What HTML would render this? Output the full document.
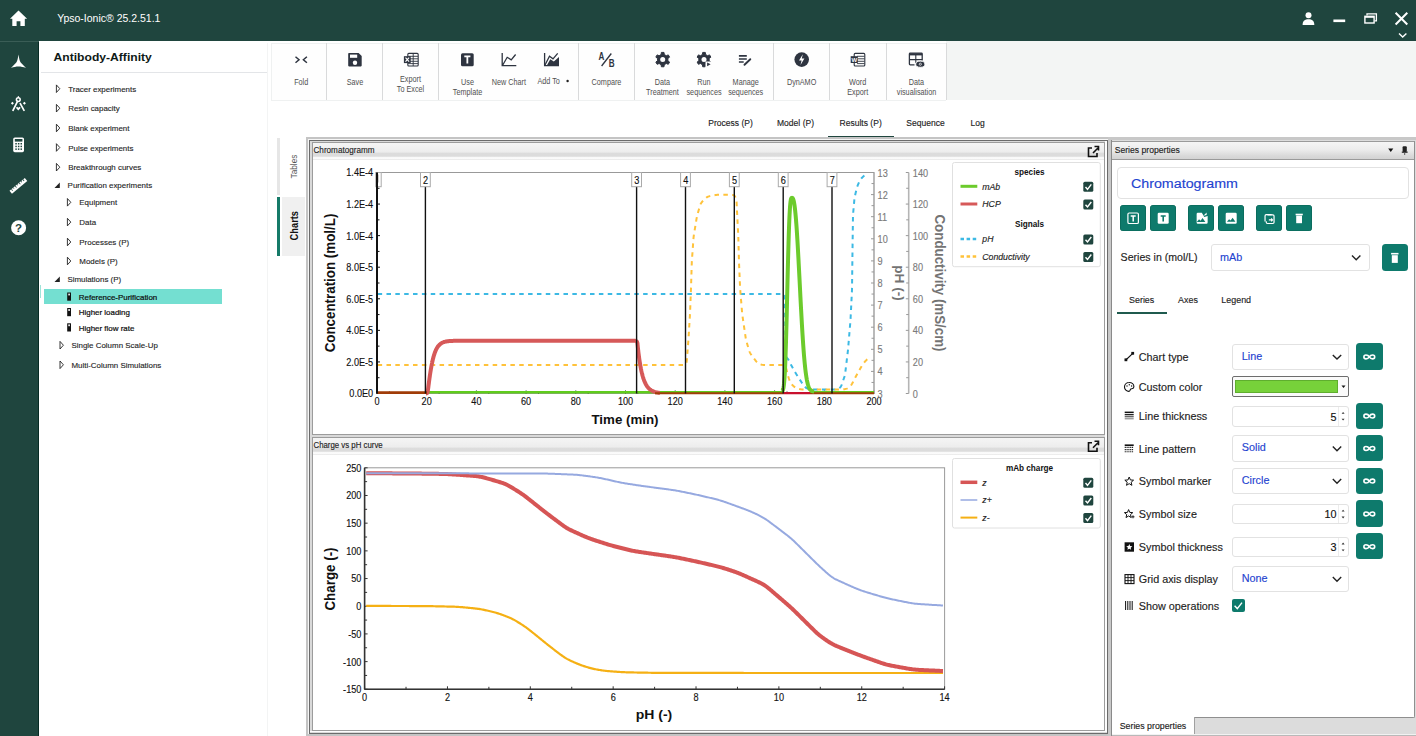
<!DOCTYPE html><html><head><meta charset="utf-8"><style>
*{box-sizing:border-box;margin:0;padding:0}
html,body{width:1416px;height:736px;overflow:hidden;background:#fff;font-family:"Liberation Sans",sans-serif;color:#222}
.a{position:absolute}
svg{position:absolute;left:0;top:0;font-family:"Liberation Sans",sans-serif}
</style></head><body>
<div class="a" style="left:0.00px;top:0.00px;width:1416.00px;height:41.00px;background:#1f453e"></div>
<div class="a" style="left:0.00px;top:41.00px;width:39.00px;height:695.00px;background:#1f453e"></div>
<div class="a" style="left:0.00px;top:41.00px;width:39.00px;height:1.00px;background:#3a5d56"></div>
<div class="a" style="left:38.00px;top:42.00px;width:1.00px;height:694.00px;background:#072b24"></div>
<div class="a" style="left:41.00px;top:72.00px;width:227.00px;height:1.20px;background:#e3e5e8"></div>
<div class="a" style="left:267.30px;top:42.50px;width:1.00px;height:693.50px;background:#f3f4f4"></div>
<div class="a" style="left:43.50px;top:289.20px;width:178.00px;height:14.70px;background:#74dfd1"></div>
<div class="a" style="left:39.60px;top:285.40px;width:1.40px;height:13.10px;background:#9fe3d8"></div>
<div class="a" style="left:271.30px;top:42.50px;width:675.00px;height:58.00px;background:#fefefe;border:1px solid #eff1f1;border-right:none"></div>
<div class="a" style="left:946.00px;top:41.00px;width:470.00px;height:59.00px;background:#f3f5f4"></div>
<div class="a" style="left:326.00px;top:43.00px;width:1.30px;height:57.00px;background:#d9dadb"></div>
<div class="a" style="left:382.00px;top:43.00px;width:1.30px;height:57.00px;background:#d9dadb"></div>
<div class="a" style="left:438.00px;top:43.00px;width:1.30px;height:57.00px;background:#d9dadb"></div>
<div class="a" style="left:578.00px;top:43.00px;width:1.30px;height:57.00px;background:#d9dadb"></div>
<div class="a" style="left:634.00px;top:43.00px;width:1.30px;height:57.00px;background:#d9dadb"></div>
<div class="a" style="left:773.00px;top:43.00px;width:1.30px;height:57.00px;background:#d9dadb"></div>
<div class="a" style="left:829.00px;top:43.00px;width:1.30px;height:57.00px;background:#d9dadb"></div>
<div class="a" style="left:886.00px;top:43.00px;width:1.30px;height:57.00px;background:#d9dadb"></div>
<div class="a" style="left:946.00px;top:43.00px;width:1.30px;height:57.00px;background:#d9dadb"></div>
<div class="a" style="left:828.00px;top:135.60px;width:66.00px;height:2.20px;background:#1f453e"></div>
<div class="a" style="left:277.00px;top:137.60px;width:3.00px;height:57.00px;background:#e6e6e6"></div>
<div class="a" style="left:277.00px;top:196.50px;width:3.00px;height:59.50px;background:#167a68"></div>
<div class="a" style="left:282.00px;top:196.50px;width:23.00px;height:59.50px;background:#f0f0f0"></div>
<div class="a" style="left:306.00px;top:137.00px;width:804.00px;height:599.00px;background:#c4c4c4"></div>
<div class="a" style="left:308.00px;top:139.00px;width:800.00px;height:594.70px;background:#f6f6f6"></div>
<div class="a" style="left:309.00px;top:140.00px;width:799.00px;height:593.70px;border:1px solid #6b6b6b;background:#d9d9d9"></div>
<div class="a" style="left:312.00px;top:142.30px;width:793.30px;height:292.70px;border:1px solid #9c9c9c;background:#fff"></div>
<div class="a" style="left:313.00px;top:143.30px;width:791.30px;height:16.50px;background:linear-gradient(#f5f5f5 0%,#ededed 52%,#dcdcdc 62%,#dcdcdc 78%,#f9f9f9 84%,#fbfbfb 94%,#dedede 100%)"></div>
<div class="a" style="left:312.00px;top:437.40px;width:793.30px;height:293.20px;border:1px solid #9c9c9c;background:#fff"></div>
<div class="a" style="left:313.00px;top:438.40px;width:791.30px;height:16.50px;background:linear-gradient(#f5f5f5 0%,#ededed 52%,#dcdcdc 62%,#dcdcdc 78%,#f9f9f9 84%,#fbfbfb 94%,#dedede 100%)"></div>
<div class="a" style="left:1105.30px;top:141.00px;width:1.80px;height:591.00px;background:#fdfdfd"></div>
<div class="a" style="left:310.00px;top:730.60px;width:797.00px;height:1.30px;background:#fdfdfd"></div>
<div class="a" style="left:1108.00px;top:137.00px;width:308.00px;height:599.00px;background:#c8c8c8"></div>
<div class="a" style="left:1111.00px;top:140.00px;width:305.00px;height:596.00px;background:#dcdcdc;border-left:1px solid #8a8a8a"></div>
<div class="a" style="left:1112.00px;top:140.50px;width:303.00px;height:577.50px;background:#fff;border-right:1.3px solid #8f8f8f;border-bottom:1.3px solid #8f8f8f;border-top:1px solid #9a9a9a;border-bottom-right-radius:2px"></div>
<div class="a" style="left:1112.00px;top:141.50px;width:301.70px;height:18.50px;background:linear-gradient(#f5f5f5,#ececec 45%,#dadada 80%,#d2d2d2);border-bottom:1.3px solid #9a9a9a"></div>
<div class="a" style="left:1112.00px;top:716.60px;width:83.00px;height:18.00px;background:#fff;border-right:1px solid #a0a0a0"></div>
<div class="a" style="left:1112.00px;top:734.30px;width:304.00px;height:1.00px;background:#f2f2f2"></div>
<div class="a" style="left:1112.00px;top:735.30px;width:304.00px;height:0.70px;background:#b9b9b9"></div>
<div class="a" style="left:1117.20px;top:166.80px;width:291.40px;height:31.80px;border:1px solid #e2e2e2;border-radius:4px;background:#fff"></div>
<div class="a" style="left:1120.00px;top:205.10px;width:26.20px;height:26.30px;background:#0e7a6c;border-radius:3.5px;box-shadow:inset 0 0 0 0.6px #096455"></div>
<div class="a" style="left:1149.70px;top:205.10px;width:26.20px;height:26.30px;background:#0e7a6c;border-radius:3.5px;box-shadow:inset 0 0 0 0.6px #096455"></div>
<div class="a" style="left:1188.10px;top:205.10px;width:26.20px;height:26.30px;background:#0e7a6c;border-radius:3.5px;box-shadow:inset 0 0 0 0.6px #096455"></div>
<div class="a" style="left:1217.90px;top:205.10px;width:26.20px;height:26.30px;background:#0e7a6c;border-radius:3.5px;box-shadow:inset 0 0 0 0.6px #096455"></div>
<div class="a" style="left:1256.30px;top:205.10px;width:26.20px;height:26.30px;background:#0e7a6c;border-radius:3.5px;box-shadow:inset 0 0 0 0.6px #096455"></div>
<div class="a" style="left:1286.00px;top:205.10px;width:26.20px;height:26.30px;background:#0e7a6c;border-radius:3.5px;box-shadow:inset 0 0 0 0.6px #096455"></div>
<div class="a" style="left:1210.50px;top:244.40px;width:159.20px;height:26.20px;border:1px solid #e2e2e2;border-radius:3px;background:#fff"></div>
<div class="a" style="left:1381.60px;top:244.10px;width:26.40px;height:26.50px;background:#0e7a6c;border-radius:3.5px"></div>
<div class="a" style="left:1117.20px;top:312.00px;width:49.60px;height:2.20px;background:#1f5a4e"></div>
<div class="a" style="left:1231.80px;top:343.60px;width:117.70px;height:26.40px;border:1px solid #e2e2e2;border-radius:3px;background:#fff"></div>
<div class="a" style="left:1356.00px;top:343.30px;width:26.60px;height:26.40px;background:#0e7a6c;border-radius:3.5px"></div>
<div class="a" style="left:1231.80px;top:376.20px;width:117.70px;height:20.40px;border:1px solid #6d6d6d;border-radius:2px;background:#fafafa"></div>
<div class="a" style="left:1235.30px;top:380.30px;width:102.70px;height:12.70px;background:#77d13a;border:1px solid #5fae2e"></div>
<div class="a" style="left:1231.80px;top:406.00px;width:117.70px;height:20.50px;border:1px solid #e2e2e2;border-radius:3px;background:#fff"></div>
<div class="a" style="left:1338.00px;top:407.00px;width:1.00px;height:18.50px;background:#ececec"></div>
<div class="a" style="left:1356.00px;top:402.50px;width:26.60px;height:26.40px;background:#0e7a6c;border-radius:3.5px"></div>
<div class="a" style="left:1231.80px;top:435.20px;width:117.70px;height:26.40px;border:1px solid #e2e2e2;border-radius:3px;background:#fff"></div>
<div class="a" style="left:1356.00px;top:434.90px;width:26.60px;height:26.40px;background:#0e7a6c;border-radius:3.5px"></div>
<div class="a" style="left:1231.80px;top:467.80px;width:117.70px;height:26.40px;border:1px solid #e2e2e2;border-radius:3px;background:#fff"></div>
<div class="a" style="left:1356.00px;top:467.50px;width:26.60px;height:26.40px;background:#0e7a6c;border-radius:3.5px"></div>
<div class="a" style="left:1231.80px;top:503.80px;width:117.70px;height:20.50px;border:1px solid #e2e2e2;border-radius:3px;background:#fff"></div>
<div class="a" style="left:1338.00px;top:504.80px;width:1.00px;height:18.50px;background:#ececec"></div>
<div class="a" style="left:1356.00px;top:500.30px;width:26.60px;height:26.40px;background:#0e7a6c;border-radius:3.5px"></div>
<div class="a" style="left:1231.80px;top:536.60px;width:117.70px;height:20.50px;border:1px solid #e2e2e2;border-radius:3px;background:#fff"></div>
<div class="a" style="left:1338.00px;top:537.60px;width:1.00px;height:18.50px;background:#ececec"></div>
<div class="a" style="left:1356.00px;top:533.10px;width:26.60px;height:26.40px;background:#0e7a6c;border-radius:3.5px"></div>
<div class="a" style="left:1231.80px;top:565.70px;width:117.70px;height:26.40px;border:1px solid #e2e2e2;border-radius:3px;background:#fff"></div>
<div class="a" style="left:1232.00px;top:599.20px;width:12.70px;height:13.20px;background:#0e7a6c;border-radius:2px"></div>
<svg width="1416" height="736"><text transform="translate(57.20,21.70) scale(1.040,1)" font-size="10.10" fill="#fff" font-weight="normal" font-style="normal" text-anchor="start">Ypso-Ionic® 25.2.51.1</text><text transform="translate(53.50,60.90) scale(1.064,1)" font-size="11.40" fill="#0f1a17" font-weight="bold" font-style="normal" text-anchor="start">Antibody-Affinity</text><text transform="translate(68.20,91.70) scale(1.025,1)" font-size="7.75" fill="#1e1e1e" font-weight="normal" font-style="normal" text-anchor="start" stroke="#1e1e1e" stroke-width="0.12">Tracer experiments</text><path d="M56.4,84.9 L59.8,88.7 L56.4,92.5 Z" fill="none" stroke="#222" stroke-width="0.9" stroke-linejoin="round"/><text transform="translate(68.20,111.20) scale(1.025,1)" font-size="7.75" fill="#1e1e1e" font-weight="normal" font-style="normal" text-anchor="start" stroke="#1e1e1e" stroke-width="0.12">Resin capacity</text><path d="M56.4,104.4 L59.8,108.2 L56.4,112.0 Z" fill="none" stroke="#222" stroke-width="0.9" stroke-linejoin="round"/><text transform="translate(68.20,131.00) scale(1.025,1)" font-size="7.75" fill="#1e1e1e" font-weight="normal" font-style="normal" text-anchor="start" stroke="#1e1e1e" stroke-width="0.12">Blank experiment</text><path d="M56.4,124.2 L59.8,128.0 L56.4,131.8 Z" fill="none" stroke="#222" stroke-width="0.9" stroke-linejoin="round"/><text transform="translate(68.20,150.50) scale(1.025,1)" font-size="7.75" fill="#1e1e1e" font-weight="normal" font-style="normal" text-anchor="start" stroke="#1e1e1e" stroke-width="0.12">Pulse experiments</text><path d="M56.4,143.7 L59.8,147.5 L56.4,151.3 Z" fill="none" stroke="#222" stroke-width="0.9" stroke-linejoin="round"/><text transform="translate(68.20,170.20) scale(1.025,1)" font-size="7.75" fill="#1e1e1e" font-weight="normal" font-style="normal" text-anchor="start" stroke="#1e1e1e" stroke-width="0.12">Breakthrough curves</text><path d="M56.4,163.4 L59.8,167.2 L56.4,171.0 Z" fill="none" stroke="#222" stroke-width="0.9" stroke-linejoin="round"/><text transform="translate(67.60,187.80) scale(1.025,1)" font-size="7.75" fill="#1e1e1e" font-weight="normal" font-style="normal" text-anchor="start" stroke="#1e1e1e" stroke-width="0.12">Purification experiments</text><path d="M54.5,188.0 L59.8,182.5 L59.8,188.0 Z" fill="#222"/><text transform="translate(79.30,205.30) scale(1.025,1)" font-size="7.75" fill="#1e1e1e" font-weight="normal" font-style="normal" text-anchor="start" stroke="#1e1e1e" stroke-width="0.12">Equipment</text><path d="M67.4,198.5 L70.8,202.3 L67.4,206.1 Z" fill="none" stroke="#222" stroke-width="0.9" stroke-linejoin="round"/><text transform="translate(79.30,225.10) scale(1.025,1)" font-size="7.75" fill="#1e1e1e" font-weight="normal" font-style="normal" text-anchor="start" stroke="#1e1e1e" stroke-width="0.12">Data</text><path d="M67.4,218.3 L70.8,222.1 L67.4,225.9 Z" fill="none" stroke="#222" stroke-width="0.9" stroke-linejoin="round"/><text transform="translate(79.30,245.00) scale(1.025,1)" font-size="7.75" fill="#1e1e1e" font-weight="normal" font-style="normal" text-anchor="start" stroke="#1e1e1e" stroke-width="0.12">Processes (P)</text><path d="M67.4,238.2 L70.8,242.0 L67.4,245.8 Z" fill="none" stroke="#222" stroke-width="0.9" stroke-linejoin="round"/><text transform="translate(79.30,264.00) scale(1.025,1)" font-size="7.75" fill="#1e1e1e" font-weight="normal" font-style="normal" text-anchor="start" stroke="#1e1e1e" stroke-width="0.12">Models (P)</text><path d="M67.4,257.2 L70.8,261.0 L67.4,264.8 Z" fill="none" stroke="#222" stroke-width="0.9" stroke-linejoin="round"/><text transform="translate(67.40,281.90) scale(1.025,1)" font-size="7.75" fill="#1e1e1e" font-weight="normal" font-style="normal" text-anchor="start" stroke="#1e1e1e" stroke-width="0.12">Simulations (P)</text><path d="M54.5,282.1 L59.8,276.6 L59.8,282.1 Z" fill="#222"/><text transform="translate(78.80,299.80) scale(1.025,1)" font-size="7.75" fill="#0d0d0d" font-weight="normal" font-style="normal" text-anchor="start" stroke="#0d0d0d" stroke-width="0.20">Reference-Purification</text><rect x="67.2" y="292.5" width="3.8" height="8.2" fill="#111"/><rect x="68.3" y="293.6" width="1.6" height="1.8" fill="#fff"/><text transform="translate(78.80,315.30) scale(1.025,1)" font-size="7.75" fill="#0d0d0d" font-weight="normal" font-style="normal" text-anchor="start" stroke="#0d0d0d" stroke-width="0.20">Higher loading</text><rect x="67.2" y="308.0" width="3.8" height="8.2" fill="#111"/><rect x="68.3" y="309.1" width="1.6" height="1.8" fill="#fff"/><text transform="translate(78.80,330.60) scale(1.025,1)" font-size="7.75" fill="#0d0d0d" font-weight="normal" font-style="normal" text-anchor="start" stroke="#0d0d0d" stroke-width="0.20">Higher flow rate</text><rect x="67.2" y="323.3" width="3.8" height="8.2" fill="#111"/><rect x="68.3" y="324.4" width="1.6" height="1.8" fill="#fff"/><text transform="translate(71.50,348.20) scale(1.025,1)" font-size="7.75" fill="#1e1e1e" font-weight="normal" font-style="normal" text-anchor="start" stroke="#1e1e1e" stroke-width="0.12">Single Column Scale-Up</text><path d="M60.0,341.4 L63.4,345.2 L60.0,349.0 Z" fill="none" stroke="#222" stroke-width="0.9" stroke-linejoin="round"/><text transform="translate(71.50,367.80) scale(1.025,1)" font-size="7.75" fill="#1e1e1e" font-weight="normal" font-style="normal" text-anchor="start" stroke="#1e1e1e" stroke-width="0.12">Multi-Column Simulations</text><path d="M60.0,361.0 L63.4,364.8 L60.0,368.6 Z" fill="none" stroke="#222" stroke-width="0.9" stroke-linejoin="round"/><text transform="translate(301.20,85.10) scale(0.885,1)" font-size="8.20" fill="#505050" font-weight="normal" font-style="normal" text-anchor="middle">Fold</text><text transform="translate(355.00,85.10) scale(0.885,1)" font-size="8.20" fill="#505050" font-weight="normal" font-style="normal" text-anchor="middle">Save</text><text transform="translate(410.50,82.20) scale(0.885,1)" font-size="8.20" fill="#505050" font-weight="normal" font-style="normal" text-anchor="middle">Export</text><text transform="translate(410.50,91.70) scale(0.885,1)" font-size="8.20" fill="#505050" font-weight="normal" font-style="normal" text-anchor="middle">To Excel</text><text transform="translate(467.50,85.10) scale(0.885,1)" font-size="8.20" fill="#505050" font-weight="normal" font-style="normal" text-anchor="middle">Use</text><text transform="translate(467.50,94.60) scale(0.885,1)" font-size="8.20" fill="#505050" font-weight="normal" font-style="normal" text-anchor="middle">Template</text><text transform="translate(508.90,85.10) scale(0.885,1)" font-size="8.20" fill="#505050" font-weight="normal" font-style="normal" text-anchor="middle">New Chart</text><text transform="translate(548.60,83.70) scale(0.885,1)" font-size="8.20" fill="#505050" font-weight="normal" font-style="normal" text-anchor="middle">Add To</text><text transform="translate(606.50,85.10) scale(0.885,1)" font-size="8.20" fill="#505050" font-weight="normal" font-style="normal" text-anchor="middle">Compare</text><text transform="translate(662.50,85.10) scale(0.885,1)" font-size="8.20" fill="#505050" font-weight="normal" font-style="normal" text-anchor="middle">Data</text><text transform="translate(662.50,94.60) scale(0.885,1)" font-size="8.20" fill="#505050" font-weight="normal" font-style="normal" text-anchor="middle">Treatment</text><text transform="translate(704.00,85.10) scale(0.885,1)" font-size="8.20" fill="#505050" font-weight="normal" font-style="normal" text-anchor="middle">Run</text><text transform="translate(704.00,94.60) scale(0.885,1)" font-size="8.20" fill="#505050" font-weight="normal" font-style="normal" text-anchor="middle">sequences</text><text transform="translate(745.70,85.10) scale(0.885,1)" font-size="8.20" fill="#505050" font-weight="normal" font-style="normal" text-anchor="middle">Manage</text><text transform="translate(745.70,94.60) scale(0.885,1)" font-size="8.20" fill="#505050" font-weight="normal" font-style="normal" text-anchor="middle">sequences</text><text transform="translate(801.60,85.10) scale(0.885,1)" font-size="8.20" fill="#505050" font-weight="normal" font-style="normal" text-anchor="middle">DynAMO</text><text transform="translate(857.70,85.10) scale(0.885,1)" font-size="8.20" fill="#505050" font-weight="normal" font-style="normal" text-anchor="middle">Word</text><text transform="translate(857.70,94.60) scale(0.885,1)" font-size="8.20" fill="#505050" font-weight="normal" font-style="normal" text-anchor="middle">Export</text><text transform="translate(916.50,85.10) scale(0.885,1)" font-size="8.20" fill="#505050" font-weight="normal" font-style="normal" text-anchor="middle">Data</text><text transform="translate(916.50,94.60) scale(0.885,1)" font-size="8.20" fill="#505050" font-weight="normal" font-style="normal" text-anchor="middle">visualisation</text><circle cx="567.6" cy="81" r="1.2" fill="#222"/><text transform="translate(708.20,125.80) scale(0.920,1)" font-size="9.30" fill="#222" font-weight="normal" font-style="normal" text-anchor="start" stroke="#222" stroke-width="0.14">Process (P)</text><text transform="translate(777.00,125.80) scale(0.920,1)" font-size="9.30" fill="#222" font-weight="normal" font-style="normal" text-anchor="start" stroke="#222" stroke-width="0.14">Model (P)</text><text transform="translate(839.50,125.80) scale(0.920,1)" font-size="9.30" fill="#222" font-weight="normal" font-style="normal" text-anchor="start" stroke="#222" stroke-width="0.14">Results (P)</text><text transform="translate(906.30,125.80) scale(0.920,1)" font-size="9.30" fill="#222" font-weight="normal" font-style="normal" text-anchor="start" stroke="#222" stroke-width="0.14">Sequence</text><text transform="translate(970.60,125.80) scale(0.920,1)" font-size="9.30" fill="#222" font-weight="normal" font-style="normal" text-anchor="start" stroke="#222" stroke-width="0.14">Log</text><text transform="translate(297.40,178.50) rotate(-90) scale(0.940,1)" font-size="8.80" fill="#555" font-weight="normal" font-style="normal" text-anchor="start">Tables</text><text transform="translate(298.10,240.40) rotate(-90) scale(0.860,1)" font-size="10.80" fill="#111" font-weight="bold" font-style="normal" text-anchor="start">Charts</text><text transform="translate(313.50,152.60) scale(0.946,1)" font-size="8.60" fill="#222" font-weight="normal" font-style="normal" text-anchor="start" stroke="#222" stroke-width="0.14">Chromatogramm</text><text transform="translate(313.50,447.60) scale(0.912,1)" font-size="8.60" fill="#222" font-weight="normal" font-style="normal" text-anchor="start" stroke="#222" stroke-width="0.14">Charge vs pH curve</text><text transform="translate(1114.70,152.70) scale(0.980,1)" font-size="8.80" fill="#222" font-weight="normal" font-style="normal" text-anchor="start" stroke="#222" stroke-width="0.14">Series properties</text><text transform="translate(1119.70,728.50)" font-size="8.80" fill="#222" font-weight="normal" font-style="normal" text-anchor="start" stroke="#222" stroke-width="0.14">Series properties</text><text transform="translate(1130.90,187.90) scale(1.043,1)" font-size="13.70" fill="#1e43d0" font-weight="normal" font-style="normal" text-anchor="start" stroke="#1e43d0" stroke-width="0.14">Chromatogramm</text><text transform="translate(1120.60,261.20) scale(0.980,1)" font-size="10.80" fill="#222" font-weight="normal" font-style="normal" text-anchor="start" stroke="#222" stroke-width="0.14">Series in (mol/L)</text><text transform="translate(1220.00,261.00)" font-size="10.80" fill="#1e43d0" font-weight="normal" font-style="normal" text-anchor="start" stroke="#1e43d0" stroke-width="0.14">mAb</text><text transform="translate(1129.00,303.20) scale(0.930,1)" font-size="9.60" fill="#222" font-weight="normal" font-style="normal" text-anchor="start" stroke="#222" stroke-width="0.14">Series</text><text transform="translate(1178.00,303.20) scale(0.930,1)" font-size="9.60" fill="#222" font-weight="normal" font-style="normal" text-anchor="start" stroke="#222" stroke-width="0.14">Axes</text><text transform="translate(1221.30,303.20) scale(0.930,1)" font-size="9.60" fill="#222" font-weight="normal" font-style="normal" text-anchor="start" stroke="#222" stroke-width="0.14">Legend</text><text transform="translate(1138.80,360.90)" font-size="10.80" fill="#222" font-weight="normal" font-style="normal" text-anchor="start" stroke="#222" stroke-width="0.14">Chart type</text><text transform="translate(1241.80,359.80)" font-size="10.80" fill="#1e43d0" font-weight="normal" font-style="normal" text-anchor="start" stroke="#1e43d0" stroke-width="0.14">Line</text><text transform="translate(1138.80,390.70)" font-size="10.80" fill="#222" font-weight="normal" font-style="normal" text-anchor="start" stroke="#222" stroke-width="0.14">Custom color</text><text transform="translate(1138.80,420.10)" font-size="10.80" fill="#222" font-weight="normal" font-style="normal" text-anchor="start" stroke="#222" stroke-width="0.14">Line thickness</text><text transform="translate(1336.40,420.60)" font-size="10.80" fill="#111" font-weight="normal" font-style="normal" text-anchor="end" stroke="#111" stroke-width="0.14">5</text><text transform="translate(1138.80,452.50)" font-size="10.80" fill="#222" font-weight="normal" font-style="normal" text-anchor="start" stroke="#222" stroke-width="0.14">Line pattern</text><text transform="translate(1241.80,451.40)" font-size="10.80" fill="#1e43d0" font-weight="normal" font-style="normal" text-anchor="start" stroke="#1e43d0" stroke-width="0.14">Solid</text><text transform="translate(1138.80,485.10)" font-size="10.80" fill="#222" font-weight="normal" font-style="normal" text-anchor="start" stroke="#222" stroke-width="0.14">Symbol marker</text><text transform="translate(1241.80,484.00)" font-size="10.80" fill="#1e43d0" font-weight="normal" font-style="normal" text-anchor="start" stroke="#1e43d0" stroke-width="0.14">Circle</text><text transform="translate(1138.80,517.90)" font-size="10.80" fill="#222" font-weight="normal" font-style="normal" text-anchor="start" stroke="#222" stroke-width="0.14">Symbol size</text><text transform="translate(1336.40,518.40)" font-size="10.80" fill="#111" font-weight="normal" font-style="normal" text-anchor="end" stroke="#111" stroke-width="0.14">10</text><text transform="translate(1138.80,550.70)" font-size="10.80" fill="#222" font-weight="normal" font-style="normal" text-anchor="start" stroke="#222" stroke-width="0.14">Symbol thickness</text><text transform="translate(1336.40,551.20)" font-size="10.80" fill="#111" font-weight="normal" font-style="normal" text-anchor="end" stroke="#111" stroke-width="0.14">3</text><text transform="translate(1138.80,583.00)" font-size="10.80" fill="#222" font-weight="normal" font-style="normal" text-anchor="start" stroke="#222" stroke-width="0.14">Grid axis display</text><text transform="translate(1241.80,581.90)" font-size="10.80" fill="#1e43d0" font-weight="normal" font-style="normal" text-anchor="start" stroke="#1e43d0" stroke-width="0.14">None</text><text transform="translate(1138.80,609.70)" font-size="10.80" fill="#222" font-weight="normal" font-style="normal" text-anchor="start" stroke="#222" stroke-width="0.14">Show operations</text><rect x="377.0" y="172.5" width="497.0" height="221.0" fill="#fff" stroke="#999" stroke-width="1"/><line x1="377.0" y1="393.50" x2="380.0" y2="393.50" stroke="#111" stroke-width="1"/><line x1="377.0" y1="377.71" x2="379.5" y2="377.71" stroke="#111" stroke-width="1"/><text transform="translate(373.20,397.40) scale(0.840,1)" font-size="10.90" fill="#111" font-weight="normal" font-style="normal" text-anchor="end" stroke="#111" stroke-width="0.14">0.0E0</text><line x1="377.0" y1="361.93" x2="380.0" y2="361.93" stroke="#111" stroke-width="1"/><line x1="377.0" y1="346.14" x2="379.5" y2="346.14" stroke="#111" stroke-width="1"/><text transform="translate(373.20,365.83) scale(0.840,1)" font-size="10.90" fill="#111" font-weight="normal" font-style="normal" text-anchor="end" stroke="#111" stroke-width="0.14">2.0E-5</text><line x1="377.0" y1="330.36" x2="380.0" y2="330.36" stroke="#111" stroke-width="1"/><line x1="377.0" y1="314.57" x2="379.5" y2="314.57" stroke="#111" stroke-width="1"/><text transform="translate(373.20,334.26) scale(0.840,1)" font-size="10.90" fill="#111" font-weight="normal" font-style="normal" text-anchor="end" stroke="#111" stroke-width="0.14">4.0E-5</text><line x1="377.0" y1="298.79" x2="380.0" y2="298.79" stroke="#111" stroke-width="1"/><line x1="377.0" y1="283.00" x2="379.5" y2="283.00" stroke="#111" stroke-width="1"/><text transform="translate(373.20,302.69) scale(0.840,1)" font-size="10.90" fill="#111" font-weight="normal" font-style="normal" text-anchor="end" stroke="#111" stroke-width="0.14">6.0E-5</text><line x1="377.0" y1="267.21" x2="380.0" y2="267.21" stroke="#111" stroke-width="1"/><line x1="377.0" y1="251.43" x2="379.5" y2="251.43" stroke="#111" stroke-width="1"/><text transform="translate(373.20,271.11) scale(0.840,1)" font-size="10.90" fill="#111" font-weight="normal" font-style="normal" text-anchor="end" stroke="#111" stroke-width="0.14">8.0E-5</text><line x1="377.0" y1="235.64" x2="380.0" y2="235.64" stroke="#111" stroke-width="1"/><line x1="377.0" y1="219.86" x2="379.5" y2="219.86" stroke="#111" stroke-width="1"/><text transform="translate(373.20,239.54) scale(0.840,1)" font-size="10.90" fill="#111" font-weight="normal" font-style="normal" text-anchor="end" stroke="#111" stroke-width="0.14">1.0E-4</text><line x1="377.0" y1="204.07" x2="380.0" y2="204.07" stroke="#111" stroke-width="1"/><line x1="377.0" y1="188.29" x2="379.5" y2="188.29" stroke="#111" stroke-width="1"/><text transform="translate(373.20,207.97) scale(0.840,1)" font-size="10.90" fill="#111" font-weight="normal" font-style="normal" text-anchor="end" stroke="#111" stroke-width="0.14">1.2E-4</text><line x1="377.0" y1="172.50" x2="380.0" y2="172.50" stroke="#111" stroke-width="1"/><text transform="translate(373.20,176.40) scale(0.840,1)" font-size="10.90" fill="#111" font-weight="normal" font-style="normal" text-anchor="end" stroke="#111" stroke-width="0.14">1.4E-4</text><line x1="377.00" y1="393.5" x2="377.00" y2="390.5" stroke="#111" stroke-width="1"/><line x1="389.40" y1="393.5" x2="389.40" y2="391.5" stroke="#111" stroke-width="1"/><text transform="translate(377.00,404.80) scale(0.840,1)" font-size="10.90" fill="#111" font-weight="normal" font-style="normal" text-anchor="middle" stroke="#111" stroke-width="0.14">0</text><line x1="426.70" y1="393.5" x2="426.70" y2="390.5" stroke="#111" stroke-width="1"/><line x1="439.10" y1="393.5" x2="439.10" y2="391.5" stroke="#111" stroke-width="1"/><text transform="translate(426.70,404.80) scale(0.840,1)" font-size="10.90" fill="#111" font-weight="normal" font-style="normal" text-anchor="middle" stroke="#111" stroke-width="0.14">20</text><line x1="476.40" y1="393.5" x2="476.40" y2="390.5" stroke="#111" stroke-width="1"/><line x1="488.80" y1="393.5" x2="488.80" y2="391.5" stroke="#111" stroke-width="1"/><text transform="translate(476.40,404.80) scale(0.840,1)" font-size="10.90" fill="#111" font-weight="normal" font-style="normal" text-anchor="middle" stroke="#111" stroke-width="0.14">40</text><line x1="526.10" y1="393.5" x2="526.10" y2="390.5" stroke="#111" stroke-width="1"/><line x1="538.50" y1="393.5" x2="538.50" y2="391.5" stroke="#111" stroke-width="1"/><text transform="translate(526.10,404.80) scale(0.840,1)" font-size="10.90" fill="#111" font-weight="normal" font-style="normal" text-anchor="middle" stroke="#111" stroke-width="0.14">60</text><line x1="575.80" y1="393.5" x2="575.80" y2="390.5" stroke="#111" stroke-width="1"/><line x1="588.20" y1="393.5" x2="588.20" y2="391.5" stroke="#111" stroke-width="1"/><text transform="translate(575.80,404.80) scale(0.840,1)" font-size="10.90" fill="#111" font-weight="normal" font-style="normal" text-anchor="middle" stroke="#111" stroke-width="0.14">80</text><line x1="625.50" y1="393.5" x2="625.50" y2="390.5" stroke="#111" stroke-width="1"/><line x1="637.90" y1="393.5" x2="637.90" y2="391.5" stroke="#111" stroke-width="1"/><text transform="translate(625.50,404.80) scale(0.840,1)" font-size="10.90" fill="#111" font-weight="normal" font-style="normal" text-anchor="middle" stroke="#111" stroke-width="0.14">100</text><line x1="675.20" y1="393.5" x2="675.20" y2="390.5" stroke="#111" stroke-width="1"/><line x1="687.60" y1="393.5" x2="687.60" y2="391.5" stroke="#111" stroke-width="1"/><text transform="translate(675.20,404.80) scale(0.840,1)" font-size="10.90" fill="#111" font-weight="normal" font-style="normal" text-anchor="middle" stroke="#111" stroke-width="0.14">120</text><line x1="724.90" y1="393.5" x2="724.90" y2="390.5" stroke="#111" stroke-width="1"/><line x1="737.30" y1="393.5" x2="737.30" y2="391.5" stroke="#111" stroke-width="1"/><text transform="translate(724.90,404.80) scale(0.840,1)" font-size="10.90" fill="#111" font-weight="normal" font-style="normal" text-anchor="middle" stroke="#111" stroke-width="0.14">140</text><line x1="774.60" y1="393.5" x2="774.60" y2="390.5" stroke="#111" stroke-width="1"/><line x1="787.00" y1="393.5" x2="787.00" y2="391.5" stroke="#111" stroke-width="1"/><text transform="translate(774.60,404.80) scale(0.840,1)" font-size="10.90" fill="#111" font-weight="normal" font-style="normal" text-anchor="middle" stroke="#111" stroke-width="0.14">160</text><line x1="824.30" y1="393.5" x2="824.30" y2="390.5" stroke="#111" stroke-width="1"/><line x1="836.70" y1="393.5" x2="836.70" y2="391.5" stroke="#111" stroke-width="1"/><text transform="translate(824.30,404.80) scale(0.840,1)" font-size="10.90" fill="#111" font-weight="normal" font-style="normal" text-anchor="middle" stroke="#111" stroke-width="0.14">180</text><line x1="874.00" y1="393.5" x2="874.00" y2="390.5" stroke="#111" stroke-width="1"/><text transform="translate(874.00,404.80) scale(0.840,1)" font-size="10.90" fill="#111" font-weight="normal" font-style="normal" text-anchor="middle" stroke="#111" stroke-width="0.14">200</text><line x1="874" y1="172.5" x2="874" y2="393.5" stroke="#b5b5b5" stroke-width="1.6"/><line x1="871" y1="393.50" x2="874" y2="393.50" stroke="#999" stroke-width="1"/><line x1="871.5" y1="382.45" x2="874" y2="382.45" stroke="#999" stroke-width="1"/><text transform="translate(877.60,397.50) scale(0.840,1)" font-size="10.90" fill="#7a7a7a" font-weight="normal" font-style="normal" text-anchor="start" stroke="#7a7a7a" stroke-width="0.14">3</text><line x1="871" y1="371.40" x2="874" y2="371.40" stroke="#999" stroke-width="1"/><line x1="871.5" y1="360.35" x2="874" y2="360.35" stroke="#999" stroke-width="1"/><text transform="translate(877.60,375.40) scale(0.840,1)" font-size="10.90" fill="#7a7a7a" font-weight="normal" font-style="normal" text-anchor="start" stroke="#7a7a7a" stroke-width="0.14">4</text><line x1="871" y1="349.30" x2="874" y2="349.30" stroke="#999" stroke-width="1"/><line x1="871.5" y1="338.25" x2="874" y2="338.25" stroke="#999" stroke-width="1"/><text transform="translate(877.60,353.30) scale(0.840,1)" font-size="10.90" fill="#7a7a7a" font-weight="normal" font-style="normal" text-anchor="start" stroke="#7a7a7a" stroke-width="0.14">5</text><line x1="871" y1="327.20" x2="874" y2="327.20" stroke="#999" stroke-width="1"/><line x1="871.5" y1="316.15" x2="874" y2="316.15" stroke="#999" stroke-width="1"/><text transform="translate(877.60,331.20) scale(0.840,1)" font-size="10.90" fill="#7a7a7a" font-weight="normal" font-style="normal" text-anchor="start" stroke="#7a7a7a" stroke-width="0.14">6</text><line x1="871" y1="305.10" x2="874" y2="305.10" stroke="#999" stroke-width="1"/><line x1="871.5" y1="294.05" x2="874" y2="294.05" stroke="#999" stroke-width="1"/><text transform="translate(877.60,309.10) scale(0.840,1)" font-size="10.90" fill="#7a7a7a" font-weight="normal" font-style="normal" text-anchor="start" stroke="#7a7a7a" stroke-width="0.14">7</text><line x1="871" y1="283.00" x2="874" y2="283.00" stroke="#999" stroke-width="1"/><line x1="871.5" y1="271.95" x2="874" y2="271.95" stroke="#999" stroke-width="1"/><text transform="translate(877.60,287.00) scale(0.840,1)" font-size="10.90" fill="#7a7a7a" font-weight="normal" font-style="normal" text-anchor="start" stroke="#7a7a7a" stroke-width="0.14">8</text><line x1="871" y1="260.90" x2="874" y2="260.90" stroke="#999" stroke-width="1"/><line x1="871.5" y1="249.85" x2="874" y2="249.85" stroke="#999" stroke-width="1"/><text transform="translate(877.60,264.90) scale(0.840,1)" font-size="10.90" fill="#7a7a7a" font-weight="normal" font-style="normal" text-anchor="start" stroke="#7a7a7a" stroke-width="0.14">9</text><line x1="871" y1="238.80" x2="874" y2="238.80" stroke="#999" stroke-width="1"/><line x1="871.5" y1="227.75" x2="874" y2="227.75" stroke="#999" stroke-width="1"/><text transform="translate(877.60,242.80) scale(0.840,1)" font-size="10.90" fill="#7a7a7a" font-weight="normal" font-style="normal" text-anchor="start" stroke="#7a7a7a" stroke-width="0.14">10</text><line x1="871" y1="216.70" x2="874" y2="216.70" stroke="#999" stroke-width="1"/><line x1="871.5" y1="205.65" x2="874" y2="205.65" stroke="#999" stroke-width="1"/><text transform="translate(877.60,220.70) scale(0.840,1)" font-size="10.90" fill="#7a7a7a" font-weight="normal" font-style="normal" text-anchor="start" stroke="#7a7a7a" stroke-width="0.14">11</text><line x1="871" y1="194.60" x2="874" y2="194.60" stroke="#999" stroke-width="1"/><line x1="871.5" y1="183.55" x2="874" y2="183.55" stroke="#999" stroke-width="1"/><text transform="translate(877.60,198.60) scale(0.840,1)" font-size="10.90" fill="#7a7a7a" font-weight="normal" font-style="normal" text-anchor="start" stroke="#7a7a7a" stroke-width="0.14">12</text><line x1="871" y1="172.50" x2="874" y2="172.50" stroke="#999" stroke-width="1"/><text transform="translate(877.60,176.50) scale(0.840,1)" font-size="10.90" fill="#7a7a7a" font-weight="normal" font-style="normal" text-anchor="start" stroke="#7a7a7a" stroke-width="0.14">13</text><line x1="908.7" y1="172.5" x2="908.7" y2="393.5" stroke="#b5b5b5" stroke-width="1.6"/><line x1="905.8" y1="393.50" x2="908.7" y2="393.50" stroke="#999" stroke-width="1"/><line x1="906.2" y1="377.70" x2="908.7" y2="377.70" stroke="#999" stroke-width="1"/><text transform="translate(912.80,397.50) scale(0.840,1)" font-size="10.90" fill="#7a7a7a" font-weight="normal" font-style="normal" text-anchor="start" stroke="#7a7a7a" stroke-width="0.14">0</text><line x1="905.8" y1="361.93" x2="908.7" y2="361.93" stroke="#999" stroke-width="1"/><line x1="906.2" y1="346.13" x2="908.7" y2="346.13" stroke="#999" stroke-width="1"/><text transform="translate(912.80,365.93) scale(0.840,1)" font-size="10.90" fill="#7a7a7a" font-weight="normal" font-style="normal" text-anchor="start" stroke="#7a7a7a" stroke-width="0.14">20</text><line x1="905.8" y1="330.36" x2="908.7" y2="330.36" stroke="#999" stroke-width="1"/><line x1="906.2" y1="314.56" x2="908.7" y2="314.56" stroke="#999" stroke-width="1"/><text transform="translate(912.80,334.36) scale(0.840,1)" font-size="10.90" fill="#7a7a7a" font-weight="normal" font-style="normal" text-anchor="start" stroke="#7a7a7a" stroke-width="0.14">40</text><line x1="905.8" y1="298.79" x2="908.7" y2="298.79" stroke="#999" stroke-width="1"/><line x1="906.2" y1="282.99" x2="908.7" y2="282.99" stroke="#999" stroke-width="1"/><text transform="translate(912.80,302.79) scale(0.840,1)" font-size="10.90" fill="#7a7a7a" font-weight="normal" font-style="normal" text-anchor="start" stroke="#7a7a7a" stroke-width="0.14">60</text><line x1="905.8" y1="267.21" x2="908.7" y2="267.21" stroke="#999" stroke-width="1"/><line x1="906.2" y1="251.41" x2="908.7" y2="251.41" stroke="#999" stroke-width="1"/><text transform="translate(912.80,271.21) scale(0.840,1)" font-size="10.90" fill="#7a7a7a" font-weight="normal" font-style="normal" text-anchor="start" stroke="#7a7a7a" stroke-width="0.14">80</text><line x1="905.8" y1="235.64" x2="908.7" y2="235.64" stroke="#999" stroke-width="1"/><line x1="906.2" y1="219.84" x2="908.7" y2="219.84" stroke="#999" stroke-width="1"/><text transform="translate(912.80,239.64) scale(0.840,1)" font-size="10.90" fill="#7a7a7a" font-weight="normal" font-style="normal" text-anchor="start" stroke="#7a7a7a" stroke-width="0.14">100</text><line x1="905.8" y1="204.07" x2="908.7" y2="204.07" stroke="#999" stroke-width="1"/><line x1="906.2" y1="188.27" x2="908.7" y2="188.27" stroke="#999" stroke-width="1"/><text transform="translate(912.80,208.07) scale(0.840,1)" font-size="10.90" fill="#7a7a7a" font-weight="normal" font-style="normal" text-anchor="start" stroke="#7a7a7a" stroke-width="0.14">120</text><line x1="905.8" y1="172.50" x2="908.7" y2="172.50" stroke="#999" stroke-width="1"/><text transform="translate(912.80,176.50) scale(0.840,1)" font-size="10.90" fill="#7a7a7a" font-weight="normal" font-style="normal" text-anchor="start" stroke="#7a7a7a" stroke-width="0.14">140</text><text transform="translate(335.10,283.00) rotate(-90) scale(0.955,1)" font-size="14.00" fill="#111" font-weight="bold" font-style="normal" text-anchor="middle">Concentration (mol/L)</text><text transform="translate(625.00,423.60) scale(0.980,1)" font-size="13.60" fill="#111" font-weight="bold" font-style="normal" text-anchor="middle">Time (min)</text><text transform="translate(895.00,283.00) rotate(90)" font-size="13.60" fill="#737373" font-weight="bold" font-style="normal" text-anchor="middle">pH (-)</text><text transform="translate(934.80,283.00) rotate(90) scale(0.940,1)" font-size="14.20" fill="#737373" font-weight="bold" font-style="normal" text-anchor="middle">Conductivity (mS/cm)</text><defs><clipPath id="cp1"><rect x="377.0" y="172.5" width="497.0" height="224.0"/></clipPath><clipPath id="cp2"><rect x="364.6" y="467.8" width="580.0" height="221.5"/></clipPath></defs><g clip-path="url(#cp1)"><path d="M377.63,294.05 L378.11,294.05 L378.73,294.05 L379.45,294.05 L380.22,294.05 L381.01,294.05 L381.81,294.05 L382.61,294.05 L383.41,294.05 L384.21,294.05 L385.01,294.05 L385.81,294.05 L386.61,294.05 L387.42,294.05 L388.22,294.05 L389.02,294.05 L389.82,294.05 L390.62,294.05 L391.42,294.05 L392.22,294.05 L393.02,294.05 L393.82,294.05 L394.63,294.05 L395.43,294.05 L396.23,294.05 L397.03,294.05 L397.83,294.05 L398.63,294.05 L399.43,294.05 L400.23,294.05 L401.04,294.05 L401.84,294.05 L402.64,294.05 L403.44,294.05 L404.24,294.05 L405.04,294.05 L405.84,294.05 L406.64,294.05 L407.44,294.05 L408.25,294.05 L409.05,294.05 L409.85,294.05 L410.65,294.05 L411.45,294.05 L412.25,294.05 L413.05,294.05 L413.85,294.05 L414.66,294.05 L415.46,294.05 L416.26,294.05 L417.06,294.05 L417.86,294.05 L418.66,294.05 L419.46,294.05 L420.26,294.05 L421.06,294.05 L421.87,294.05 L422.67,294.05 L423.47,294.05 L424.27,294.05 L425.07,294.05 L425.87,294.05 L426.67,294.05 L427.47,294.05 L428.28,294.05 L429.08,294.05 L429.88,294.05 L430.68,294.05 L431.48,294.05 L432.28,294.05 L433.08,294.05 L433.88,294.05 L434.68,294.05 L435.49,294.05 L436.29,294.05 L437.09,294.05 L437.89,294.05 L438.69,294.05 L439.49,294.05 L440.29,294.05 L441.09,294.05 L441.90,294.05 L442.70,294.05 L443.50,294.05 L444.30,294.05 L445.10,294.05 L445.90,294.05 L446.70,294.05 L447.50,294.05 L448.30,294.05 L449.11,294.05 L449.91,294.05 L450.71,294.05 L451.51,294.05 L452.31,294.05 L453.11,294.05 L453.91,294.05 L454.71,294.05 L455.52,294.05 L456.32,294.05 L457.12,294.05 L457.92,294.05 L458.72,294.05 L459.52,294.05 L460.32,294.05 L461.12,294.05 L461.92,294.05 L462.73,294.05 L463.53,294.05 L464.33,294.05 L465.13,294.05 L465.93,294.05 L466.73,294.05 L467.53,294.05 L468.33,294.05 L469.14,294.05 L469.94,294.05 L470.74,294.05 L471.54,294.05 L472.34,294.05 L473.14,294.05 L473.94,294.05 L474.74,294.05 L475.54,294.05 L476.35,294.05 L477.15,294.05 L477.95,294.05 L478.75,294.05 L479.55,294.05 L480.35,294.05 L481.15,294.05 L481.95,294.05 L482.76,294.05 L483.56,294.05 L484.36,294.05 L485.16,294.05 L485.96,294.05 L486.76,294.05 L487.56,294.05 L488.36,294.05 L489.17,294.05 L489.97,294.05 L490.77,294.05 L491.57,294.05 L492.37,294.05 L493.17,294.05 L493.97,294.05 L494.77,294.05 L495.57,294.05 L496.38,294.05 L497.18,294.05 L497.98,294.05 L498.78,294.05 L499.58,294.05 L500.38,294.05 L501.18,294.05 L501.98,294.05 L502.79,294.05 L503.59,294.05 L504.39,294.05 L505.19,294.05 L505.99,294.05 L506.79,294.05 L507.59,294.05 L508.39,294.05 L509.19,294.05 L510.00,294.05 L510.80,294.05 L511.60,294.05 L512.40,294.05 L513.20,294.05 L514.00,294.05 L514.80,294.05 L515.60,294.05 L516.41,294.05 L517.21,294.05 L518.01,294.05 L518.81,294.05 L519.61,294.05 L520.41,294.05 L521.21,294.05 L522.01,294.05 L522.81,294.05 L523.62,294.05 L524.42,294.05 L525.22,294.05 L526.02,294.05 L526.82,294.05 L527.62,294.05 L528.42,294.05 L529.22,294.05 L530.03,294.05 L530.83,294.05 L531.63,294.05 L532.43,294.05 L533.23,294.05 L534.03,294.05 L534.83,294.05 L535.63,294.05 L536.43,294.05 L537.24,294.05 L538.04,294.05 L538.84,294.05 L539.64,294.05 L540.44,294.05 L541.24,294.05 L542.04,294.05 L542.84,294.05 L543.65,294.05 L544.45,294.05 L545.25,294.05 L546.05,294.05 L546.85,294.05 L547.65,294.05 L548.45,294.05 L549.25,294.05 L550.05,294.05 L550.86,294.05 L551.66,294.05 L552.46,294.05 L553.26,294.05 L554.06,294.05 L554.86,294.05 L555.66,294.05 L556.46,294.05 L557.27,294.05 L558.07,294.05 L558.87,294.05 L559.67,294.05 L560.47,294.05 L561.27,294.05 L562.07,294.05 L562.87,294.05 L563.67,294.05 L564.48,294.05 L565.28,294.05 L566.08,294.05 L566.88,294.05 L567.68,294.05 L568.48,294.05 L569.28,294.05 L570.08,294.05 L570.89,294.05 L571.69,294.05 L572.49,294.05 L573.29,294.05 L574.09,294.05 L574.89,294.05 L575.69,294.05 L576.49,294.05 L577.29,294.05 L578.10,294.05 L578.90,294.05 L579.70,294.05 L580.50,294.05 L581.30,294.05 L582.10,294.05 L582.90,294.05 L583.70,294.05 L584.51,294.05 L585.31,294.05 L586.11,294.05 L586.91,294.05 L587.71,294.05 L588.51,294.05 L589.31,294.05 L590.11,294.05 L590.91,294.05 L591.72,294.05 L592.52,294.05 L593.32,294.05 L594.12,294.05 L594.92,294.05 L595.72,294.05 L596.52,294.05 L597.32,294.05 L598.13,294.05 L598.93,294.05 L599.73,294.05 L600.53,294.05 L601.33,294.05 L602.13,294.05 L602.93,294.05 L603.73,294.05 L604.53,294.05 L605.34,294.05 L606.14,294.05 L606.94,294.05 L607.74,294.05 L608.54,294.05 L609.34,294.05 L610.14,294.05 L610.94,294.05 L611.75,294.05 L612.55,294.05 L613.35,294.05 L614.15,294.05 L614.95,294.05 L615.75,294.05 L616.55,294.05 L617.35,294.05 L618.15,294.05 L618.96,294.05 L619.76,294.05 L620.56,294.05 L621.36,294.05 L622.16,294.05 L622.96,294.05 L623.76,294.05 L624.56,294.05 L625.37,294.05 L626.17,294.05 L626.97,294.05 L627.77,294.05 L628.57,294.05 L629.37,294.05 L630.17,294.05 L630.97,294.05 L631.77,294.05 L632.58,294.05 L633.38,294.05 L634.18,294.05 L634.98,294.05 L635.78,294.05 L636.58,294.05 L637.38,294.05 L638.18,294.05 L638.99,294.05 L639.79,294.05 L640.59,294.05 L641.39,294.05 L642.19,294.05 L642.99,294.05 L643.79,294.05 L644.59,294.05 L645.39,294.05 L646.20,294.05 L647.00,294.05 L647.80,294.05 L648.60,294.05 L649.40,294.05 L650.20,294.05 L651.00,294.05 L651.80,294.05 L652.61,294.05 L653.41,294.05 L654.21,294.05 L655.01,294.05 L655.81,294.05 L656.61,294.05 L657.41,294.05 L658.21,294.05 L659.01,294.05 L659.82,294.05 L660.62,294.05 L661.42,294.05 L662.22,294.05 L663.02,294.05 L663.82,294.05 L664.62,294.05 L665.42,294.05 L666.23,294.05 L667.03,294.05 L667.83,294.05 L668.63,294.05 L669.43,294.05 L670.23,294.05 L671.03,294.05 L671.83,294.05 L672.63,294.05 L673.44,294.05 L674.24,294.05 L675.04,294.05 L675.84,294.05 L676.64,294.05 L677.44,294.05 L678.24,294.05 L679.04,294.05 L679.85,294.05 L680.65,294.05 L681.45,294.05 L682.25,294.05 L683.05,294.05 L683.85,294.05 L684.65,294.05 L685.45,294.05 L686.26,294.05 L687.06,294.05 L687.86,294.05 L688.66,294.05 L689.46,294.05 L690.26,294.05 L691.06,294.05 L691.86,294.05 L692.66,294.05 L693.47,294.05 L694.27,294.05 L695.07,294.05 L695.87,294.05 L696.67,294.05 L697.47,294.05 L698.27,294.05 L699.07,294.05 L699.88,294.05 L700.68,294.05 L701.48,294.05 L702.28,294.05 L703.08,294.05 L703.88,294.05 L704.68,294.05 L705.48,294.05 L706.28,294.05 L707.09,294.05 L707.89,294.05 L708.69,294.05 L709.49,294.05 L710.29,294.05 L711.09,294.05 L711.89,294.05 L712.69,294.05 L713.50,294.05 L714.30,294.05 L715.10,294.05 L715.90,294.05 L716.70,294.05 L717.50,294.05 L718.30,294.05 L719.10,294.05 L719.90,294.05 L720.71,294.05 L721.51,294.05 L722.31,294.05 L723.11,294.05 L723.91,294.05 L724.71,294.05 L725.51,294.05 L726.31,294.05 L727.12,294.05 L727.92,294.05 L728.72,294.05 L729.52,294.05 L730.32,294.05 L731.12,294.05 L731.92,294.05 L732.72,294.05 L733.52,294.05 L734.33,294.05 L735.13,294.05 L735.93,294.05 L736.73,294.05 L737.53,294.05 L738.33,294.05 L739.13,294.05 L739.93,294.05 L740.74,294.05 L741.54,294.05 L742.34,294.05 L743.14,294.05 L743.94,294.05 L744.74,294.05 L745.54,294.05 L746.34,294.05 L747.14,294.05 L747.95,294.05 L748.75,294.05 L749.55,294.05 L750.35,294.05 L751.15,294.05 L751.95,294.05 L752.75,294.05 L753.55,294.05 L754.36,294.05 L755.16,294.05 L755.96,294.05 L756.76,294.05 L757.56,294.05 L758.36,294.05 L759.16,294.05 L759.96,294.05 L760.76,294.05 L761.57,294.05 L762.37,294.05 L763.17,294.05 L763.97,294.05 L764.77,294.05 L765.57,294.05 L766.37,294.05 L767.17,294.05 L767.98,294.05 L768.78,294.05 L769.58,294.05 L770.38,294.05 L771.18,294.05 L771.98,294.05 L772.78,294.05 L773.58,294.05 L774.38,294.05 L775.19,294.05 L775.99,294.05 L776.79,294.05 L777.59,294.05 L778.39,294.05 L779.19,294.05 L779.99,294.05 L780.79,294.05 L781.58,294.06 L782.35,294.09 L783.07,294.18 L783.70,294.36 L784.18,294.69 L784.51,295.18 L784.70,295.81 L784.79,296.54 L784.83,297.33 L784.85,298.14 L784.87,298.95 L784.88,299.77 L784.89,300.59 L784.90,301.40 L784.91,302.22 L784.92,303.04 L784.94,303.85 L784.95,304.67 L784.96,305.49 L784.97,306.31 L784.98,307.12 L784.99,307.94 L785.00,308.76 L785.02,309.57 L785.03,310.39 L785.04,311.21 L785.05,312.03 L785.06,312.84 L785.07,313.66 L785.08,314.48 L785.10,315.29 L785.11,316.11 L785.12,316.93 L785.13,317.74 L785.14,318.56 L785.15,319.38 L785.16,320.20 L785.18,321.01 L785.19,321.83 L785.20,322.65 L785.21,323.46 L785.22,324.28 L785.23,325.10 L785.24,325.91 L785.25,326.73 L785.27,327.55 L785.28,328.37 L785.29,329.18 L785.30,330.00 L785.31,330.82 L785.32,331.64 L785.33,332.45 L785.34,333.27 L785.35,334.09 L785.35,334.91 L785.36,335.73 L785.37,336.55 L785.38,337.36 L785.39,338.18 L785.40,339.00 L785.41,339.82 L785.42,340.64 L785.43,341.45 L785.44,342.27 L785.45,343.09 L785.45,343.91 L785.46,344.73 L785.47,345.55 L785.48,346.36 L785.49,347.18 L785.50,348.00 L785.51,348.82 L785.52,349.64 L785.53,350.45 L785.54,351.27 L785.55,352.09 L785.56,352.91 L785.58,353.72 L785.61,354.53 L785.70,355.31 L785.88,356.06 L786.19,356.76 L786.63,357.42 L787.15,358.05 L787.68,358.68 L788.17,359.34 L788.60,360.04 L788.98,360.76 L789.34,361.50 L789.70,362.25 L790.06,363.00 L790.45,363.75 L790.85,364.50 L791.25,365.25 L791.67,366.00 L792.08,366.75 L792.50,367.50 L792.92,368.25 L793.33,369.00 L793.75,369.75 L794.17,370.50 L794.60,371.24 L795.03,371.98 L795.47,372.72 L795.92,373.45 L796.37,374.18 L796.82,374.91 L797.27,375.64 L797.73,376.36 L798.18,377.09 L798.64,377.81 L799.09,378.54 L799.54,379.25 L799.99,379.95 L800.44,380.64 L800.89,381.32 L801.33,382.00 L801.78,382.67 L802.22,383.33 L802.67,383.99 L803.14,384.65 L803.61,385.29 L804.12,385.92 L804.66,386.51 L805.24,387.08 L805.84,387.60 L806.49,388.06 L807.18,388.44 L807.92,388.72 L808.70,388.93 L809.51,389.07 L810.33,389.18 L811.16,389.26 L811.98,389.32 L812.80,389.36 L813.62,389.38 L814.44,389.39 L815.25,389.40 L816.06,389.40 L816.87,389.40 L817.69,389.40 L818.50,389.40 L819.31,389.40 L820.12,389.40 L820.94,389.40 L821.75,389.40 L822.56,389.40 L823.38,389.40 L824.19,389.40 L825.00,389.40 L825.81,389.40 L826.62,389.40 L827.44,389.40 L828.25,389.40 L829.06,389.40 L829.87,389.40 L830.69,389.40 L831.50,389.40 L832.31,389.40 L833.12,389.40 L833.94,389.40 L834.75,389.39 L835.56,389.37 L836.37,389.31 L837.16,389.17 L837.94,388.93 L838.70,388.56 L839.41,388.08 L840.06,387.49 L840.62,386.84 L841.08,386.12 L841.46,385.37 L841.77,384.59 L842.06,383.80 L842.33,383.00 L842.60,382.20 L842.87,381.40 L843.13,380.60 L843.40,379.80 L843.67,379.00 L843.93,378.20 L844.19,377.40 L844.44,376.60 L844.67,375.80 L844.87,374.99 L845.03,374.19 L845.17,373.39 L845.28,372.58 L845.38,371.77 L845.48,370.97 L845.58,370.16 L845.68,369.35 L845.77,368.55 L845.87,367.74 L845.97,366.94 L846.06,366.13 L846.16,365.32 L846.26,364.52 L846.35,363.71 L846.45,362.90 L846.55,362.10 L846.65,361.29 L846.74,360.48 L846.84,359.68 L846.94,358.87 L847.03,358.06 L847.13,357.26 L847.23,356.45 L847.32,355.65 L847.42,354.84 L847.52,354.03 L847.61,353.23 L847.71,352.42 L847.80,351.61 L847.89,350.80 L847.98,350.00 L848.06,349.19 L848.13,348.38 L848.20,347.57 L848.27,346.76 L848.34,345.95 L848.41,345.14 L848.47,344.32 L848.54,343.51 L848.61,342.70 L848.68,341.89 L848.74,341.08 L848.81,340.27 L848.88,339.46 L848.95,338.65 L849.01,337.84 L849.08,337.03 L849.15,336.22 L849.22,335.41 L849.28,334.59 L849.35,333.78 L849.42,332.97 L849.49,332.16 L849.55,331.35 L849.62,330.54 L849.69,329.73 L849.76,328.92 L849.82,328.11 L849.89,327.30 L849.96,326.49 L850.03,325.68 L850.09,324.86 L850.16,324.05 L850.23,323.24 L850.30,322.43 L850.36,321.62 L850.42,320.81 L850.48,320.00 L850.53,319.19 L850.58,318.38 L850.62,317.57 L850.66,316.76 L850.70,315.95 L850.74,315.14 L850.78,314.32 L850.82,313.51 L850.86,312.70 L850.91,311.89 L850.95,311.08 L850.99,310.27 L851.03,309.46 L851.07,308.65 L851.11,307.84 L851.15,307.03 L851.19,306.22 L851.23,305.41 L851.27,304.59 L851.31,303.78 L851.35,302.97 L851.39,302.16 L851.43,301.35 L851.47,300.54 L851.51,299.73 L851.55,298.92 L851.59,298.11 L851.64,297.30 L851.68,296.49 L851.72,295.68 L851.76,294.86 L851.80,294.05 L851.84,293.24 L851.88,292.43 L851.91,291.62 L851.95,290.81 L851.98,290.01 L852.00,289.20 L852.02,288.40 L852.03,287.60 L852.04,286.80 L852.05,286.00 L852.06,285.20 L852.07,284.40 L852.08,283.60 L852.09,282.80 L852.10,282.00 L852.11,281.20 L852.12,280.40 L852.13,279.60 L852.14,278.80 L852.15,278.00 L852.16,277.20 L852.17,276.40 L852.18,275.60 L852.19,274.80 L852.20,274.00 L852.21,273.20 L852.22,272.40 L852.23,271.60 L852.24,270.80 L852.25,270.00 L852.26,269.20 L852.27,268.40 L852.28,267.60 L852.29,266.80 L852.30,266.00 L852.31,265.20 L852.32,264.40 L852.33,263.60 L852.34,262.80 L852.35,262.00 L852.36,261.20 L852.37,260.40 L852.38,259.60 L852.39,258.80 L852.40,258.00 L852.41,257.20 L852.42,256.40 L852.43,255.60 L852.44,254.80 L852.45,254.00 L852.46,253.20 L852.47,252.40 L852.48,251.60 L852.49,250.79 L852.50,249.99 L852.51,249.18 L852.52,248.37 L852.53,247.56 L852.55,246.74 L852.56,245.93 L852.57,245.12 L852.58,244.30 L852.59,243.49 L852.60,242.67 L852.62,241.86 L852.63,241.05 L852.64,240.23 L852.65,239.42 L852.66,238.60 L852.67,237.79 L852.69,236.98 L852.70,236.16 L852.71,235.35 L852.72,234.53 L852.73,233.72 L852.74,232.91 L852.76,232.09 L852.77,231.28 L852.78,230.47 L852.79,229.65 L852.80,228.84 L852.81,228.02 L852.83,227.21 L852.84,226.40 L852.85,225.58 L852.86,224.77 L852.87,223.95 L852.88,223.14 L852.90,222.33 L852.91,221.51 L852.92,220.70 L852.93,219.88 L852.94,219.07 L852.95,218.26 L852.97,217.44 L852.99,216.63 L853.01,215.82 L853.05,215.00 L853.09,214.19 L853.15,213.38 L853.22,212.57 L853.29,211.76 L853.36,210.95 L853.43,210.14 L853.50,209.33 L853.57,208.52 L853.64,207.71 L853.71,206.90 L853.79,206.10 L853.86,205.29 L853.93,204.48 L854.00,203.67 L854.07,202.86 L854.14,202.05 L854.22,201.24 L854.29,200.43 L854.37,199.62 L854.47,198.82 L854.58,198.02 L854.72,197.22 L854.87,196.43 L855.04,195.64 L855.22,194.86 L855.39,194.07 L855.57,193.29 L855.75,192.50 L855.93,191.71 L856.11,190.93 L856.29,190.14 L856.47,189.36 L856.67,188.57 L856.88,187.79 L857.12,187.01 L857.39,186.23 L857.69,185.45 L858.01,184.67 L858.34,183.89 L858.67,183.11 L859.01,182.34 L859.37,181.57 L859.76,180.82 L860.20,180.09 L860.68,179.38 L861.21,178.69 L861.77,178.01 L862.36,177.36 L862.98,176.73 L863.62,176.14 L864.27,175.59 L864.91,175.10 L865.47,174.70 L865.92,174.39" fill="none" stroke="#3cb9e4" stroke-width="2" stroke-dasharray="4.5,4.35"/><path d="M377.63,365.00 L378.11,365.00 L378.73,365.00 L379.45,365.00 L380.22,365.00 L381.01,365.00 L381.81,365.00 L382.61,365.00 L383.41,365.00 L384.21,365.00 L385.01,365.00 L385.81,365.00 L386.62,365.00 L387.42,365.00 L388.22,365.00 L389.02,365.00 L389.82,365.00 L390.62,365.00 L391.42,365.00 L392.22,365.00 L393.03,365.00 L393.83,365.00 L394.63,365.00 L395.43,365.00 L396.23,365.00 L397.03,365.00 L397.83,365.00 L398.64,365.00 L399.44,365.00 L400.24,365.00 L401.04,365.00 L401.84,365.00 L402.64,365.00 L403.44,365.00 L404.24,365.00 L405.05,365.00 L405.85,365.00 L406.65,365.00 L407.45,365.00 L408.25,365.00 L409.05,365.00 L409.85,365.00 L410.65,365.00 L411.46,365.00 L412.26,365.00 L413.06,365.00 L413.86,365.00 L414.66,365.00 L415.46,365.00 L416.26,365.00 L417.06,365.00 L417.87,365.00 L418.67,365.00 L419.47,365.00 L420.27,365.00 L421.07,365.00 L421.87,365.00 L422.67,365.00 L423.48,365.00 L424.28,365.00 L425.08,365.00 L425.88,365.00 L426.68,365.00 L427.48,365.00 L428.28,365.00 L429.08,365.00 L429.89,365.00 L430.69,365.00 L431.49,365.00 L432.29,365.00 L433.09,365.00 L433.89,365.00 L434.69,365.00 L435.49,365.00 L436.30,365.00 L437.10,365.00 L437.90,365.00 L438.70,365.00 L439.50,365.00 L440.30,365.00 L441.10,365.00 L441.91,365.00 L442.71,365.00 L443.51,365.00 L444.31,365.00 L445.11,365.00 L445.91,365.00 L446.71,365.00 L447.51,365.00 L448.32,365.00 L449.12,365.00 L449.92,365.00 L450.72,365.00 L451.52,365.00 L452.32,365.00 L453.12,365.00 L453.92,365.00 L454.73,365.00 L455.53,365.00 L456.33,365.00 L457.13,365.00 L457.93,365.00 L458.73,365.00 L459.53,365.00 L460.34,365.00 L461.14,365.00 L461.94,365.00 L462.74,365.00 L463.54,365.00 L464.34,365.00 L465.14,365.00 L465.94,365.00 L466.75,365.00 L467.55,365.00 L468.35,365.00 L469.15,365.00 L469.95,365.00 L470.75,365.00 L471.55,365.00 L472.35,365.00 L473.16,365.00 L473.96,365.00 L474.76,365.00 L475.56,365.00 L476.36,365.00 L477.16,365.00 L477.96,365.00 L478.76,365.00 L479.57,365.00 L480.37,365.00 L481.17,365.00 L481.97,365.00 L482.77,365.00 L483.57,365.00 L484.37,365.00 L485.18,365.00 L485.98,365.00 L486.78,365.00 L487.58,365.00 L488.38,365.00 L489.18,365.00 L489.98,365.00 L490.78,365.00 L491.59,365.00 L492.39,365.00 L493.19,365.00 L493.99,365.00 L494.79,365.00 L495.59,365.00 L496.39,365.00 L497.19,365.00 L498.00,365.00 L498.80,365.00 L499.60,365.00 L500.40,365.00 L501.20,365.00 L502.00,365.00 L502.80,365.00 L503.61,365.00 L504.41,365.00 L505.21,365.00 L506.01,365.00 L506.81,365.00 L507.61,365.00 L508.41,365.00 L509.21,365.00 L510.02,365.00 L510.82,365.00 L511.62,365.00 L512.42,365.00 L513.22,365.00 L514.02,365.00 L514.82,365.00 L515.62,365.00 L516.43,365.00 L517.23,365.00 L518.03,365.00 L518.83,365.00 L519.63,365.00 L520.43,365.00 L521.23,365.00 L522.04,365.00 L522.84,365.00 L523.64,365.00 L524.44,365.00 L525.24,365.00 L526.04,365.00 L526.84,365.00 L527.64,365.00 L528.45,365.00 L529.25,365.00 L530.05,365.00 L530.85,365.00 L531.65,365.00 L532.45,365.00 L533.25,365.00 L534.05,365.00 L534.86,365.00 L535.66,365.00 L536.46,365.00 L537.26,365.00 L538.06,365.00 L538.86,365.00 L539.66,365.00 L540.46,365.00 L541.27,365.00 L542.07,365.00 L542.87,365.00 L543.67,365.00 L544.47,365.00 L545.27,365.00 L546.07,365.00 L546.88,365.00 L547.68,365.00 L548.48,365.00 L549.28,365.00 L550.08,365.00 L550.88,365.00 L551.68,365.00 L552.48,365.00 L553.29,365.00 L554.09,365.00 L554.89,365.00 L555.69,365.00 L556.49,365.00 L557.29,365.00 L558.09,365.00 L558.89,365.00 L559.70,365.00 L560.50,365.00 L561.30,365.00 L562.10,365.00 L562.90,365.00 L563.70,365.00 L564.50,365.00 L565.31,365.00 L566.11,365.00 L566.91,365.00 L567.71,365.00 L568.51,365.00 L569.31,365.00 L570.11,365.00 L570.91,365.00 L571.72,365.00 L572.52,365.00 L573.32,365.00 L574.12,365.00 L574.92,365.00 L575.72,365.00 L576.52,365.00 L577.32,365.00 L578.13,365.00 L578.93,365.00 L579.73,365.00 L580.53,365.00 L581.33,365.00 L582.13,365.00 L582.93,365.00 L583.74,365.00 L584.54,365.00 L585.34,365.00 L586.14,365.00 L586.94,365.00 L587.74,365.00 L588.54,365.00 L589.34,365.00 L590.15,365.00 L590.95,365.00 L591.75,365.00 L592.55,365.00 L593.35,365.00 L594.15,365.00 L594.95,365.00 L595.75,365.00 L596.56,365.00 L597.36,365.00 L598.16,365.00 L598.96,365.00 L599.76,365.00 L600.56,365.00 L601.36,365.00 L602.16,365.00 L602.97,365.00 L603.77,365.00 L604.57,365.00 L605.37,365.00 L606.17,365.00 L606.97,365.00 L607.77,365.00 L608.58,365.00 L609.38,365.00 L610.18,365.00 L610.98,365.00 L611.78,365.00 L612.58,365.00 L613.38,365.00 L614.18,365.00 L614.99,365.00 L615.79,365.00 L616.59,365.00 L617.39,365.00 L618.19,365.00 L618.99,365.00 L619.79,365.00 L620.59,365.00 L621.40,365.00 L622.20,365.00 L623.00,365.00 L623.80,365.00 L624.60,365.00 L625.40,365.00 L626.20,365.00 L627.01,365.00 L627.81,365.00 L628.61,365.00 L629.41,365.00 L630.21,365.00 L631.01,365.00 L631.81,365.00 L632.61,365.00 L633.42,365.00 L634.22,365.00 L635.02,365.00 L635.82,365.00 L636.62,365.00 L637.42,365.00 L638.22,365.00 L639.02,365.00 L639.83,365.00 L640.63,365.00 L641.43,365.00 L642.23,365.00 L643.03,365.00 L643.83,365.00 L644.63,365.00 L645.44,365.00 L646.24,365.00 L647.04,365.00 L647.84,365.00 L648.64,365.00 L649.44,365.00 L650.24,365.00 L651.04,365.00 L651.85,365.00 L652.65,365.00 L653.45,365.00 L654.25,365.00 L655.05,365.00 L655.85,365.00 L656.65,365.00 L657.45,365.00 L658.26,365.00 L659.06,365.00 L659.86,365.00 L660.66,365.00 L661.46,365.00 L662.26,365.00 L663.06,365.00 L663.86,365.00 L664.67,365.00 L665.47,365.00 L666.27,365.00 L667.07,365.00 L667.87,365.00 L668.67,365.00 L669.47,365.00 L670.28,365.00 L671.08,365.00 L671.88,365.00 L672.68,365.00 L673.48,365.00 L674.28,365.00 L675.08,365.00 L675.88,365.00 L676.69,365.00 L677.49,365.00 L678.29,365.00 L679.09,365.00 L679.89,365.00 L680.69,365.00 L681.49,365.00 L682.29,364.99 L683.08,364.96 L683.85,364.88 L684.58,364.70 L685.23,364.37 L685.77,363.89 L686.18,363.27 L686.46,362.55 L686.64,361.77 L686.76,360.98 L686.84,360.17 L686.91,359.37 L686.97,358.56 L687.03,357.75 L687.10,356.94 L687.16,356.14 L687.22,355.33 L687.28,354.52 L687.34,353.72 L687.41,352.91 L687.47,352.10 L687.53,351.30 L687.59,350.49 L687.66,349.68 L687.72,348.88 L687.78,348.07 L687.84,347.26 L687.90,346.46 L687.97,345.65 L688.03,344.84 L688.09,344.03 L688.15,343.23 L688.21,342.42 L688.27,341.61 L688.33,340.80 L688.39,340.00 L688.45,339.19 L688.50,338.37 L688.55,337.56 L688.60,336.75 L688.65,335.94 L688.70,335.12 L688.75,334.31 L688.80,333.50 L688.85,332.69 L688.90,331.87 L688.95,331.06 L689.00,330.25 L689.05,329.44 L689.10,328.62 L689.15,327.81 L689.20,327.00 L689.25,326.19 L689.30,325.38 L689.35,324.56 L689.40,323.75 L689.45,322.94 L689.50,322.13 L689.55,321.31 L689.60,320.50 L689.65,319.69 L689.70,318.88 L689.75,318.06 L689.80,317.25 L689.85,316.44 L689.90,315.63 L689.94,314.81 L689.99,314.00 L690.02,313.19 L690.06,312.38 L690.09,311.56 L690.12,310.75 L690.16,309.94 L690.19,309.12 L690.22,308.31 L690.25,307.50 L690.28,306.69 L690.31,305.88 L690.34,305.06 L690.38,304.25 L690.41,303.44 L690.44,302.62 L690.47,301.81 L690.50,301.00 L690.53,300.19 L690.56,299.38 L690.59,298.56 L690.63,297.75 L690.66,296.94 L690.69,296.13 L690.72,295.31 L690.75,294.50 L690.78,293.69 L690.81,292.88 L690.84,292.06 L690.87,291.25 L690.91,290.44 L690.94,289.62 L690.97,288.81 L691.00,288.00 L691.02,287.19 L691.05,286.38 L691.07,285.56 L691.10,284.75 L691.12,283.94 L691.15,283.12 L691.17,282.31 L691.20,281.50 L691.23,280.69 L691.25,279.88 L691.28,279.06 L691.30,278.25 L691.33,277.44 L691.35,276.62 L691.38,275.81 L691.40,275.00 L691.42,274.19 L691.45,273.38 L691.48,272.56 L691.50,271.75 L691.52,270.94 L691.55,270.12 L691.58,269.31 L691.60,268.50 L691.62,267.69 L691.65,266.87 L691.68,266.06 L691.70,265.25 L691.73,264.44 L691.76,263.62 L691.79,262.81 L691.83,261.99 L691.87,261.18 L691.92,260.36 L691.98,259.54 L692.03,258.72 L692.09,257.90 L692.15,257.08 L692.21,256.26 L692.26,255.45 L692.32,254.63 L692.38,253.81 L692.44,252.99 L692.50,252.17 L692.55,251.35 L692.61,250.53 L692.67,249.71 L692.73,248.89 L692.79,248.07 L692.85,247.25 L692.90,246.43 L692.96,245.61 L693.02,244.79 L693.08,243.97 L693.14,243.15 L693.19,242.34 L693.25,241.52 L693.31,240.70 L693.37,239.88 L693.43,239.06 L693.50,238.24 L693.57,237.43 L693.66,236.62 L693.76,235.82 L693.87,235.02 L694.00,234.22 L694.12,233.43 L694.25,232.64 L694.38,231.85 L694.52,231.05 L694.65,230.26 L694.78,229.47 L694.91,228.68 L695.04,227.88 L695.17,227.09 L695.30,226.30 L695.43,225.51 L695.56,224.72 L695.69,223.92 L695.82,223.13 L695.95,222.34 L696.08,221.55 L696.22,220.75 L696.35,219.96 L696.48,219.17 L696.61,218.38 L696.76,217.58 L696.91,216.78 L697.08,215.98 L697.28,215.18 L697.49,214.37 L697.72,213.56 L697.95,212.75 L698.19,211.94 L698.43,211.12 L698.66,210.31 L698.90,209.50 L699.14,208.69 L699.38,207.88 L699.61,207.06 L699.86,206.25 L700.11,205.45 L700.38,204.66 L700.70,203.90 L701.08,203.18 L701.53,202.51 L702.04,201.87 L702.59,201.27 L703.17,200.68 L703.76,200.09 L704.35,199.51 L704.94,198.93 L705.54,198.37 L706.15,197.83 L706.80,197.34 L707.48,196.93 L708.20,196.60 L708.97,196.34 L709.77,196.13 L710.58,195.95 L711.39,195.78 L712.21,195.62 L713.03,195.46 L713.85,195.30 L714.67,195.15 L715.49,195.03 L716.31,194.93 L717.13,194.86 L717.96,194.83 L718.78,194.81 L719.61,194.80 L720.44,194.80 L721.26,194.80 L722.09,194.80 L722.92,194.80 L723.75,194.80 L724.57,194.80 L725.40,194.80 L726.23,194.80 L727.05,194.80 L727.88,194.80 L728.71,194.80 L729.54,194.80 L730.36,194.80 L731.18,194.81 L731.99,194.85 L732.77,194.94 L733.48,195.13 L734.11,195.48 L734.64,196.00 L735.09,196.67 L735.46,197.44 L735.78,198.27 L736.05,199.12 L736.27,199.97 L736.43,200.82 L736.53,201.66 L736.60,202.49 L736.65,203.32 L736.69,204.15 L736.73,204.98 L736.77,205.82 L736.81,206.65 L736.85,207.48 L736.88,208.31 L736.92,209.13 L736.96,209.96 L737.00,210.78 L737.04,211.60 L737.08,212.41 L737.12,213.22 L737.16,214.02 L737.20,214.83 L737.24,215.64 L737.28,216.44 L737.32,217.25 L737.37,218.06 L737.41,218.86 L737.45,219.67 L737.49,220.48 L737.53,221.28 L737.57,222.09 L737.61,222.89 L737.65,223.70 L737.69,224.51 L737.73,225.31 L737.77,226.12 L737.81,226.93 L737.85,227.73 L737.89,228.54 L737.93,229.34 L737.98,230.15 L738.02,230.96 L738.06,231.76 L738.10,232.57 L738.14,233.38 L738.18,234.18 L738.22,234.99 L738.25,235.79 L738.29,236.60 L738.31,237.41 L738.34,238.21 L738.36,239.02 L738.39,239.82 L738.41,240.63 L738.43,241.44 L738.45,242.24 L738.47,243.05 L738.50,243.86 L738.52,244.66 L738.54,245.47 L738.56,246.27 L738.58,247.08 L738.61,247.89 L738.63,248.69 L738.65,249.50 L738.67,250.31 L738.69,251.11 L738.72,251.92 L738.74,252.72 L738.76,253.53 L738.78,254.34 L738.80,255.14 L738.83,255.95 L738.85,256.76 L738.87,257.56 L738.89,258.37 L738.91,259.18 L738.94,259.98 L738.96,260.79 L738.98,261.59 L739.01,262.40 L739.04,263.21 L739.07,264.02 L739.10,264.83 L739.14,265.64 L739.17,266.45 L739.21,267.26 L739.24,268.07 L739.27,268.88 L739.31,269.68 L739.34,270.49 L739.38,271.30 L739.41,272.11 L739.45,272.92 L739.48,273.73 L739.52,274.54 L739.55,275.35 L739.58,276.16 L739.62,276.97 L739.65,277.78 L739.69,278.59 L739.72,279.40 L739.76,280.21 L739.79,281.02 L739.83,281.82 L739.86,282.63 L739.89,283.44 L739.93,284.25 L739.96,285.06 L740.00,285.87 L740.04,286.68 L740.08,287.49 L740.12,288.30 L740.18,289.10 L740.24,289.91 L740.30,290.71 L740.36,291.51 L740.43,292.32 L740.49,293.12 L740.56,293.92 L740.62,294.73 L740.69,295.53 L740.76,296.33 L740.82,297.13 L740.89,297.94 L740.95,298.74 L741.02,299.54 L741.08,300.35 L741.15,301.15 L741.22,301.95 L741.28,302.76 L741.35,303.56 L741.41,304.36 L741.48,305.17 L741.54,305.97 L741.61,306.77 L741.68,307.58 L741.74,308.38 L741.81,309.18 L741.87,309.98 L741.94,310.79 L742.01,311.59 L742.08,312.40 L742.15,313.20 L742.24,314.01 L742.34,314.82 L742.45,315.63 L742.56,316.44 L742.68,317.25 L742.79,318.06 L742.91,318.88 L743.03,319.69 L743.15,320.50 L743.27,321.31 L743.39,322.12 L743.51,322.94 L743.62,323.75 L743.74,324.56 L743.86,325.38 L743.98,326.19 L744.10,327.00 L744.22,327.81 L744.34,328.63 L744.46,329.44 L744.58,330.25 L744.69,331.06 L744.81,331.88 L744.93,332.69 L745.05,333.50 L745.17,334.31 L745.29,335.13 L745.41,335.94 L745.53,336.75 L745.65,337.56 L745.78,338.38 L745.93,339.19 L746.10,340.00 L746.29,340.81 L746.51,341.62 L746.74,342.44 L746.98,343.25 L747.22,344.06 L747.46,344.88 L747.71,345.69 L747.95,346.50 L748.19,347.31 L748.44,348.12 L748.68,348.94 L748.93,349.75 L749.18,350.55 L749.45,351.35 L749.75,352.13 L750.09,352.87 L750.48,353.59 L750.91,354.27 L751.38,354.94 L751.85,355.60 L752.34,356.25 L752.83,356.90 L753.31,357.55 L753.80,358.20 L754.29,358.85 L754.78,359.50 L755.26,360.15 L755.76,360.80 L756.26,361.43 L756.78,362.05 L757.35,362.62 L757.99,363.14 L758.70,363.59 L759.48,363.97 L760.29,364.29 L761.13,364.55 L761.97,364.75 L762.80,364.88 L763.62,364.95 L764.44,364.98 L765.26,365.00 L766.08,365.00 L766.89,365.00 L767.71,365.00 L768.52,365.00 L769.34,365.00 L770.15,365.00 L770.97,365.00 L771.78,365.00 L772.60,365.00 L773.42,365.00 L774.23,365.00 L775.05,365.00 L775.86,365.00 L776.68,365.00 L777.49,365.00 L778.31,365.00 L779.12,365.00 L779.94,365.00 L780.75,365.02 L781.57,365.05 L782.38,365.13 L783.18,365.29 L783.94,365.54 L784.63,365.91 L785.20,366.41 L785.65,367.03 L785.98,367.75 L786.24,368.53 L786.46,369.34 L786.66,370.17 L786.85,371.00 L787.04,371.83 L787.23,372.67 L787.43,373.50 L787.63,374.32 L787.84,375.14 L788.06,375.94 L788.30,376.73 L788.55,377.50 L788.80,378.26 L789.07,379.02 L789.34,379.78 L789.62,380.53 L789.92,381.28 L790.26,382.01 L790.66,382.73 L791.13,383.43 L791.65,384.12 L792.23,384.78 L792.84,385.43 L793.48,386.05 L794.16,386.62 L794.88,387.15 L795.63,387.63 L796.41,388.05 L797.20,388.43 L798.00,388.73 L798.80,388.97 L799.60,389.14 L800.40,389.27 L801.20,389.36 L802.01,389.42 L802.81,389.46 L803.62,389.48 L804.43,389.49 L805.23,389.50 L806.04,389.50 L806.85,389.50 L807.66,389.50 L808.47,389.50 L809.28,389.50 L810.08,389.50 L810.89,389.50 L811.70,389.50 L812.51,389.50 L813.32,389.50 L814.12,389.50 L814.93,389.50 L815.74,389.50 L816.55,389.50 L817.36,389.50 L818.17,389.50 L818.98,389.50 L819.78,389.50 L820.59,389.50 L821.40,389.50 L822.21,389.50 L823.02,389.50 L823.82,389.50 L824.63,389.50 L825.44,389.50 L826.25,389.50 L827.06,389.50 L827.87,389.50 L828.67,389.50 L829.48,389.50 L830.29,389.50 L831.10,389.50 L831.91,389.50 L832.72,389.50 L833.53,389.50 L834.33,389.50 L835.14,389.50 L835.95,389.50 L836.76,389.50 L837.57,389.50 L838.38,389.50 L839.19,389.49 L840.00,389.48 L840.82,389.45 L841.65,389.41 L842.49,389.36 L843.33,389.29 L844.18,389.19 L845.03,389.06 L845.89,388.88 L846.75,388.66 L847.59,388.38 L848.38,388.02 L849.12,387.56 L849.78,386.99 L850.38,386.32 L850.92,385.58 L851.42,384.81 L851.89,384.04 L852.32,383.27 L852.73,382.51 L853.12,381.75 L853.50,381.00 L853.88,380.25 L854.26,379.50 L854.64,378.75 L855.03,378.00 L855.43,377.25 L855.84,376.50 L856.25,375.75 L856.67,375.00 L857.08,374.25 L857.50,373.50 L857.92,372.75 L858.33,372.00 L858.75,371.25 L859.17,370.50 L859.59,369.76 L860.02,369.02 L860.46,368.29 L860.89,367.56 L861.33,366.83 L861.78,366.11 L862.22,365.39 L862.68,364.67 L863.14,363.96 L863.63,363.25 L864.14,362.56 L864.70,361.89 L865.29,361.23 L865.90,360.58 L866.53,359.95 L867.18,359.34 L867.85,358.77 L868.54,358.26 L869.22,357.84 L869.84,357.51 L870.34,357.28" fill="none" stroke="#ffc23a" stroke-width="2" stroke-dasharray="4.5,4.35"/><path d="M427,392.2 H784 M810,392.2 H874" stroke="#5fcc1c" stroke-width="2.6"/><path d="M425.88,393.48 L426.21,393.44 L426.61,393.32 L426.98,393.10 L427.27,392.76 L427.47,392.30 L427.61,391.78 L427.73,391.22 L427.83,390.66 L427.92,390.11 L428.00,389.56 L428.08,389.02 L428.15,388.48 L428.22,387.94 L428.29,387.40 L428.36,386.87 L428.43,386.33 L428.49,385.79 L428.56,385.26 L428.63,384.73 L428.70,384.20 L428.77,383.68 L428.84,383.15 L428.91,382.62 L428.98,382.09 L429.05,381.57 L429.12,381.03 L429.19,380.50 L429.27,379.95 L429.34,379.40 L429.42,378.84 L429.50,378.29 L429.57,377.73 L429.65,377.18 L429.73,376.63 L429.81,376.09 L429.88,375.56 L429.96,375.04 L430.04,374.52 L430.12,374.01 L430.19,373.49 L430.27,372.98 L430.35,372.46 L430.44,371.94 L430.52,371.41 L430.61,370.88 L430.69,370.35 L430.78,369.81 L430.87,369.28 L430.96,368.74 L431.06,368.19 L431.16,367.64 L431.26,367.09 L431.36,366.53 L431.46,365.97 L431.57,365.42 L431.67,364.88 L431.77,364.36 L431.88,363.84 L431.98,363.33 L432.09,362.83 L432.19,362.32 L432.31,361.80 L432.42,361.27 L432.54,360.74 L432.67,360.20 L432.80,359.65 L432.93,359.09 L433.08,358.52 L433.23,357.94 L433.38,357.37 L433.53,356.80 L433.69,356.25 L433.85,355.70 L434.02,355.15 L434.19,354.59 L434.38,354.01 L434.57,353.43 L434.78,352.85 L434.98,352.29 L435.19,351.75 L435.40,351.22 L435.62,350.71 L435.84,350.20 L436.09,349.67 L436.36,349.12 L436.65,348.57 L436.95,348.03 L437.26,347.51 L437.58,347.01 L437.92,346.53 L438.29,346.04 L438.72,345.54 L439.22,345.01 L439.78,344.48 L440.38,343.97 L440.99,343.52 L441.61,343.12 L442.23,342.77 L442.85,342.48 L443.47,342.23 L444.10,342.01 L444.72,341.82 L445.34,341.67 L445.96,341.53 L446.58,341.42 L447.20,341.32 L447.82,341.23 L448.44,341.16 L449.06,341.10 L449.69,341.05 L450.31,341.01 L450.93,340.97 L451.55,340.94 L452.17,340.92 L452.79,340.89 L453.41,340.87 L454.04,340.86 L454.66,340.85 L455.28,340.83 L455.90,340.82 L456.52,340.82 L457.14,340.81 L457.76,340.80 L458.38,340.80 L459.01,340.80 L459.63,340.79 L460.25,340.79 L460.87,340.79 L461.49,340.79 L462.11,340.78 L462.73,340.78 L463.35,340.78 L463.98,340.78 L464.60,340.78 L465.22,340.78 L465.84,340.78 L466.46,340.78 L467.08,340.78 L467.70,340.78 L468.32,340.78 L468.95,340.78 L469.57,340.78 L470.19,340.78 L470.81,340.78 L471.43,340.78 L472.05,340.78 L472.67,340.78 L473.29,340.78 L473.92,340.78 L474.54,340.78 L475.16,340.78 L475.78,340.78 L476.40,340.78 L477.02,340.78 L477.64,340.78 L478.26,340.78 L478.89,340.78 L479.51,340.78 L480.13,340.78 L480.75,340.78 L481.37,340.78 L481.99,340.78 L482.61,340.78 L483.23,340.78 L483.86,340.78 L484.48,340.78 L485.10,340.78 L485.72,340.78 L486.34,340.78 L486.96,340.78 L487.58,340.78 L488.20,340.78 L488.83,340.78 L489.45,340.78 L490.07,340.78 L490.69,340.78 L491.31,340.78 L491.93,340.78 L492.55,340.78 L493.17,340.78 L493.80,340.78 L494.42,340.78 L495.04,340.78 L495.66,340.78 L496.28,340.78 L496.90,340.78 L497.52,340.78 L498.14,340.78 L498.77,340.78 L499.39,340.78 L500.01,340.78 L500.63,340.78 L501.25,340.78 L501.87,340.78 L502.49,340.78 L503.11,340.78 L503.74,340.78 L504.36,340.78 L504.98,340.78 L505.60,340.78 L506.22,340.78 L506.84,340.78 L507.46,340.78 L508.08,340.78 L508.71,340.78 L509.33,340.78 L509.95,340.78 L510.57,340.78 L511.19,340.78 L511.81,340.78 L512.43,340.78 L513.05,340.78 L513.68,340.78 L514.30,340.78 L514.92,340.78 L515.54,340.78 L516.16,340.78 L516.78,340.78 L517.40,340.78 L518.02,340.78 L518.64,340.78 L519.27,340.78 L519.89,340.78 L520.51,340.78 L521.13,340.78 L521.75,340.78 L522.37,340.78 L522.99,340.78 L523.62,340.78 L524.24,340.78 L524.86,340.78 L525.48,340.78 L526.10,340.78 L526.72,340.78 L527.34,340.78 L527.96,340.78 L528.59,340.78 L529.21,340.78 L529.83,340.78 L530.45,340.78 L531.07,340.78 L531.69,340.78 L532.31,340.78 L532.93,340.78 L533.56,340.78 L534.18,340.78 L534.80,340.78 L535.42,340.78 L536.04,340.78 L536.66,340.78 L537.28,340.78 L537.90,340.78 L538.53,340.78 L539.15,340.78 L539.77,340.78 L540.39,340.78 L541.01,340.78 L541.63,340.78 L542.25,340.78 L542.87,340.78 L543.50,340.78 L544.12,340.78 L544.74,340.78 L545.36,340.78 L545.98,340.78 L546.60,340.78 L547.22,340.78 L547.84,340.78 L548.47,340.78 L549.09,340.78 L549.71,340.78 L550.33,340.78 L550.95,340.78 L551.57,340.78 L552.19,340.78 L552.81,340.78 L553.44,340.78 L554.06,340.78 L554.68,340.78 L555.30,340.78 L555.92,340.78 L556.54,340.78 L557.16,340.78 L557.78,340.78 L558.41,340.78 L559.03,340.78 L559.65,340.78 L560.27,340.78 L560.89,340.78 L561.51,340.78 L562.13,340.78 L562.75,340.78 L563.38,340.78 L564.00,340.78 L564.62,340.78 L565.24,340.78 L565.86,340.78 L566.48,340.78 L567.10,340.78 L567.72,340.78 L568.35,340.78 L568.97,340.78 L569.59,340.78 L570.21,340.78 L570.83,340.78 L571.45,340.78 L572.07,340.78 L572.69,340.78 L573.32,340.78 L573.94,340.78 L574.56,340.78 L575.18,340.78 L575.80,340.78 L576.42,340.78 L577.04,340.78 L577.66,340.78 L578.29,340.78 L578.91,340.78 L579.53,340.78 L580.15,340.78 L580.77,340.78 L581.39,340.78 L582.01,340.78 L582.63,340.78 L583.25,340.78 L583.88,340.78 L584.50,340.78 L585.12,340.78 L585.74,340.78 L586.36,340.78 L586.98,340.78 L587.60,340.78 L588.23,340.78 L588.85,340.78 L589.47,340.78 L590.09,340.78 L590.71,340.78 L591.33,340.78 L591.95,340.78 L592.57,340.78 L593.20,340.78 L593.82,340.78 L594.44,340.78 L595.06,340.78 L595.68,340.78 L596.30,340.78 L596.92,340.78 L597.54,340.78 L598.17,340.78 L598.79,340.78 L599.41,340.78 L600.03,340.78 L600.65,340.78 L601.27,340.78 L601.89,340.78 L602.51,340.78 L603.14,340.78 L603.76,340.78 L604.38,340.78 L605.00,340.78 L605.62,340.78 L606.24,340.78 L606.86,340.78 L607.48,340.78 L608.11,340.78 L608.73,340.78 L609.35,340.78 L609.97,340.78 L610.59,340.78 L611.21,340.78 L611.83,340.78 L612.45,340.78 L613.08,340.78 L613.70,340.78 L614.32,340.78 L614.94,340.78 L615.56,340.78 L616.18,340.78 L616.80,340.78 L617.42,340.78 L618.04,340.78 L618.67,340.78 L619.29,340.78 L619.91,340.78 L620.53,340.78 L621.15,340.78 L621.77,340.78 L622.39,340.78 L623.02,340.78 L623.64,340.78 L624.26,340.78 L624.88,340.78 L625.50,340.78 L626.12,340.78 L626.74,340.78 L627.36,340.78 L627.99,340.78 L628.61,340.78 L629.23,340.78 L629.85,340.78 L630.47,340.78 L631.09,340.78 L631.71,340.78 L632.33,340.78 L632.96,340.78 L633.58,340.78 L634.20,340.78 L634.81,340.80 L635.40,340.85 L635.96,340.97 L636.44,341.21 L636.82,341.58 L637.09,342.05 L637.27,342.56 L637.38,343.07 L637.45,343.58 L637.51,344.09 L637.56,344.59 L637.61,345.10 L637.67,345.60 L637.72,346.11 L637.77,346.61 L637.82,347.12 L637.88,347.63 L637.93,348.14 L637.99,348.66 L638.05,349.19 L638.11,349.72 L638.17,350.25 L638.24,350.79 L638.30,351.32 L638.36,351.85 L638.42,352.38 L638.49,352.92 L638.55,353.44 L638.62,353.97 L638.69,354.50 L638.75,355.02 L638.82,355.54 L638.89,356.07 L638.96,356.59 L639.03,357.11 L639.10,357.63 L639.17,358.16 L639.25,358.68 L639.32,359.20 L639.40,359.72 L639.48,360.23 L639.56,360.75 L639.63,361.27 L639.71,361.79 L639.80,362.31 L639.88,362.84 L639.97,363.36 L640.06,363.88 L640.14,364.41 L640.23,364.93 L640.33,365.46 L640.42,365.99 L640.52,366.52 L640.62,367.06 L640.72,367.59 L640.83,368.14 L640.93,368.68 L641.05,369.23 L641.16,369.79 L641.28,370.35 L641.40,370.92 L641.53,371.47 L641.65,372.02 L641.78,372.55 L641.90,373.07 L642.03,373.58 L642.16,374.09 L642.30,374.62 L642.44,375.15 L642.59,375.69 L642.74,376.23 L642.90,376.76 L643.05,377.28 L643.21,377.79 L643.38,378.30 L643.55,378.83 L643.74,379.36 L643.94,379.91 L644.14,380.46 L644.36,381.00 L644.58,381.56 L644.83,382.13 L645.10,382.72 L645.39,383.33 L645.69,383.93 L646.00,384.50 L646.31,385.04 L646.62,385.56 L646.94,386.05 L647.28,386.53 L647.65,387.02 L648.08,387.53 L648.58,388.08 L649.14,388.64 L649.74,389.18 L650.35,389.68 L650.97,390.13 L651.59,390.52 L652.21,390.87 L652.84,391.18 L653.46,391.46 L654.08,391.70 L654.70,391.91 L655.32,392.09 L655.94,392.26 L656.56,392.41 L657.18,392.53 L657.80,392.65 L658.41,392.75 L658.98,392.83 L659.48,392.90 L659.86,392.94" fill="none" stroke="#d65959" stroke-width="4" stroke-linejoin="round"/><path d="M377,392.6 H427" stroke="#a03c08" stroke-width="2.8"/><path d="M655,393.3 H783.5 M810,393.3 H874" stroke="#a03c08" stroke-width="2.1"/><path d="M783.5,393.1 H810" stroke="#c8102e" stroke-width="2.2"/><path d="M782.06,393.10 L782.30,392.87 L782.55,392.53 L782.80,392.04 L783.05,391.35 L783.30,390.41 L783.55,389.14 L783.79,387.46 L784.04,385.30 L784.29,382.57 L784.54,379.19 L784.79,375.09 L785.04,370.21 L785.29,364.50 L785.53,357.96 L785.78,350.60 L786.03,342.45 L786.28,333.60 L786.53,324.14 L786.78,314.20 L787.02,303.94 L787.27,293.51 L787.52,283.09 L787.77,272.85 L788.02,262.95 L788.27,253.55 L788.52,244.76 L788.76,236.69 L789.01,229.43 L789.26,223.02 L789.51,217.49 L789.76,212.82 L790.01,209.00 L790.26,205.96 L790.50,203.65 L790.75,201.98 L791.00,200.85 L791.25,200.16 L791.50,199.80 L791.75,199.67 L792.00,199.65 L792.24,199.68 L792.49,199.81 L792.74,200.06 L792.99,200.47 L793.24,201.05 L793.49,201.81 L793.73,202.77 L793.98,203.93 L794.23,205.31 L794.48,206.91 L794.73,208.73 L794.98,210.77 L795.23,213.05 L795.47,215.54 L795.72,218.26 L795.97,221.20 L796.22,224.35 L796.47,227.71 L796.72,231.26 L796.96,235.00 L797.21,238.92 L797.46,242.99 L797.71,247.22 L797.96,251.59 L798.21,256.07 L798.46,260.66 L798.70,265.33 L798.95,270.08 L799.20,274.88 L799.45,279.71 L799.70,284.57 L799.95,289.43 L800.20,294.28 L800.44,299.09 L800.69,303.86 L800.94,308.57 L801.19,313.20 L801.44,317.74 L801.69,322.19 L801.93,326.52 L802.18,330.73 L802.43,334.80 L802.68,338.74 L802.93,342.53 L803.18,346.16 L803.43,349.64 L803.67,352.96 L803.92,356.12 L804.17,359.12 L804.42,361.95 L804.67,364.62 L804.92,367.12 L805.17,369.47 L805.41,371.67 L805.66,373.71 L805.91,375.61 L806.16,377.37 L806.41,378.99 L806.66,380.48 L806.90,381.85 L807.15,383.10 L807.40,384.25 L807.65,385.29 L807.90,386.23 L808.15,387.08 L808.40,387.85 L808.64,388.53 L808.89,389.15 L809.14,389.70 L809.39,390.19 L809.64,390.63 L809.89,391.01 L810.14,391.35 L810.38,391.65 L810.63,391.91 L810.88,392.14 L811.13,392.34 L811.38,392.51 L811.63,392.66 L811.88,392.79 L812.12,392.90 L812.37,393.00 L812.62,393.08 L812.87,393.15 L813.12,393.20 L813.37,393.25 L813.61,393.30 L813.86,393.33 L814.11,393.36" fill="none" stroke="#6ccb2c" stroke-width="4" stroke-linejoin="round" transform="translate(0,-1.8)"/></g><line x1="377.0" y1="186" x2="377.0" y2="393.5" stroke="#111" stroke-width="1.4"/><rect x="375.8" y="172.5" width="5.4" height="14.2" fill="#fff" stroke="#aaa" stroke-width="1"/><rect x="377" y="174.5" width="1.2" height="8" fill="#111"/><line x1="425.4" y1="186" x2="425.4" y2="393.5" stroke="#111" stroke-width="1.4"/><rect x="420.5" y="172.5" width="9.8" height="14.2" fill="#fff" stroke="#aaa" stroke-width="1"/><text transform="translate(425.60,184.30) scale(0.840,1)" font-size="10.90" fill="#111" font-weight="normal" font-style="normal" text-anchor="middle" stroke="#111" stroke-width="0.14">2</text><line x1="636.6" y1="186" x2="636.6" y2="393.5" stroke="#111" stroke-width="1.4"/><rect x="631.7" y="172.5" width="9.8" height="14.2" fill="#fff" stroke="#aaa" stroke-width="1"/><text transform="translate(636.80,184.30) scale(0.840,1)" font-size="10.90" fill="#111" font-weight="normal" font-style="normal" text-anchor="middle" stroke="#111" stroke-width="0.14">3</text><line x1="685.5" y1="186" x2="685.5" y2="393.5" stroke="#111" stroke-width="1.4"/><rect x="680.6" y="172.5" width="9.8" height="14.2" fill="#fff" stroke="#aaa" stroke-width="1"/><text transform="translate(685.70,184.30) scale(0.840,1)" font-size="10.90" fill="#111" font-weight="normal" font-style="normal" text-anchor="middle" stroke="#111" stroke-width="0.14">4</text><line x1="734.3" y1="186" x2="734.3" y2="393.5" stroke="#111" stroke-width="1.4"/><rect x="729.4" y="172.5" width="9.8" height="14.2" fill="#fff" stroke="#aaa" stroke-width="1"/><text transform="translate(734.50,184.30) scale(0.840,1)" font-size="10.90" fill="#111" font-weight="normal" font-style="normal" text-anchor="middle" stroke="#111" stroke-width="0.14">5</text><line x1="783.2" y1="186" x2="783.2" y2="393.5" stroke="#111" stroke-width="1.4"/><rect x="778.3" y="172.5" width="9.8" height="14.2" fill="#fff" stroke="#aaa" stroke-width="1"/><text transform="translate(783.40,184.30) scale(0.840,1)" font-size="10.90" fill="#111" font-weight="normal" font-style="normal" text-anchor="middle" stroke="#111" stroke-width="0.14">6</text><line x1="832.0" y1="186" x2="832.0" y2="393.5" stroke="#111" stroke-width="1.4"/><rect x="827.1" y="172.5" width="9.8" height="14.2" fill="#fff" stroke="#aaa" stroke-width="1"/><text transform="translate(832.20,184.30) scale(0.840,1)" font-size="10.90" fill="#111" font-weight="normal" font-style="normal" text-anchor="middle" stroke="#111" stroke-width="0.14">7</text><rect x="376" y="172.5" width="2" height="221" fill="#111"/><rect x="952.5" y="162.5" width="147.8" height="104.2" fill="#fff" stroke="#e0e0e0" rx="2"/><text transform="translate(1029.50,175.20) scale(0.890,1)" font-size="9.20" fill="#111" font-weight="bold" font-style="normal" text-anchor="middle">species</text><text transform="translate(1029.50,226.60) scale(0.890,1)" font-size="9.20" fill="#111" font-weight="bold" font-style="normal" text-anchor="middle">Signals</text><line x1="960.5" y1="186.3" x2="977.3" y2="186.3" stroke="#6ccb2c" stroke-width="3" /><text transform="translate(982.30,189.60) scale(0.980,1)" font-size="8.90" fill="#222" font-weight="normal" font-style="italic" text-anchor="start" stroke="#222" stroke-width="0.14">mAb</text><line x1="960.5" y1="204.0" x2="977.3" y2="204.0" stroke="#d65959" stroke-width="3" /><text transform="translate(982.30,207.30) scale(0.980,1)" font-size="8.90" fill="#222" font-weight="normal" font-style="italic" text-anchor="start" stroke="#222" stroke-width="0.14">HCP</text><line x1="960.5" y1="239.0" x2="977.3" y2="239.0" stroke="#3cb9e4" stroke-width="2.4" stroke-dasharray="3.5,2.6"/><text transform="translate(982.30,242.30) scale(0.980,1)" font-size="8.90" fill="#222" font-weight="normal" font-style="italic" text-anchor="start" stroke="#222" stroke-width="0.14">pH</text><line x1="960.5" y1="256.5" x2="977.3" y2="256.5" stroke="#ffc23a" stroke-width="2.4" stroke-dasharray="3.5,2.6"/><text transform="translate(982.30,259.80) scale(0.980,1)" font-size="8.90" fill="#222" font-weight="normal" font-style="italic" text-anchor="start" stroke="#222" stroke-width="0.14">Conductivity</text><rect x="1083.3" y="181.8" width="10.0" height="10.0" rx="1.5" fill="#1f453e"/><path d="M1085.5,187.0 L1087.5,189.3 L1091.3,184.3" fill="none" stroke="#fff" stroke-width="1.4"/><rect x="1083.3" y="199.5" width="10.0" height="10.0" rx="1.5" fill="#1f453e"/><path d="M1085.5,204.7 L1087.5,207.0 L1091.3,202.0" fill="none" stroke="#fff" stroke-width="1.4"/><rect x="1083.3" y="234.5" width="10.0" height="10.0" rx="1.5" fill="#1f453e"/><path d="M1085.5,239.7 L1087.5,242.0 L1091.3,237.0" fill="none" stroke="#fff" stroke-width="1.4"/><rect x="1083.3" y="252.0" width="10.0" height="10.0" rx="1.5" fill="#1f453e"/><path d="M1085.5,257.2 L1087.5,259.5 L1091.3,254.5" fill="none" stroke="#fff" stroke-width="1.4"/><rect x="364.6" y="467.8" width="580.0" height="221.5" fill="#fff" stroke="#999" stroke-width="1"/><line x1="364.6" y1="467.8" x2="364.6" y2="689.3" stroke="#333" stroke-width="1.6"/><line x1="364.6" y1="689.3" x2="944.6" y2="689.3" stroke="#333" stroke-width="1.6"/><line x1="364.6" y1="689.30" x2="367.6" y2="689.30" stroke="#333" stroke-width="1"/><line x1="364.6" y1="675.45" x2="367.1" y2="675.45" stroke="#333" stroke-width="1"/><text transform="translate(361.40,693.20) scale(0.840,1)" font-size="10.90" fill="#111" font-weight="normal" font-style="normal" text-anchor="end" stroke="#111" stroke-width="0.14">-150</text><line x1="364.6" y1="661.61" x2="367.6" y2="661.61" stroke="#333" stroke-width="1"/><line x1="364.6" y1="647.76" x2="367.1" y2="647.76" stroke="#333" stroke-width="1"/><text transform="translate(361.40,665.51) scale(0.840,1)" font-size="10.90" fill="#111" font-weight="normal" font-style="normal" text-anchor="end" stroke="#111" stroke-width="0.14">-100</text><line x1="364.6" y1="633.92" x2="367.6" y2="633.92" stroke="#333" stroke-width="1"/><line x1="364.6" y1="620.07" x2="367.1" y2="620.07" stroke="#333" stroke-width="1"/><text transform="translate(361.40,637.82) scale(0.840,1)" font-size="10.90" fill="#111" font-weight="normal" font-style="normal" text-anchor="end" stroke="#111" stroke-width="0.14">-50</text><line x1="364.6" y1="606.24" x2="367.6" y2="606.24" stroke="#333" stroke-width="1"/><line x1="364.6" y1="592.39" x2="367.1" y2="592.39" stroke="#333" stroke-width="1"/><text transform="translate(361.40,610.14) scale(0.840,1)" font-size="10.90" fill="#111" font-weight="normal" font-style="normal" text-anchor="end" stroke="#111" stroke-width="0.14">0</text><line x1="364.6" y1="578.55" x2="367.6" y2="578.55" stroke="#333" stroke-width="1"/><line x1="364.6" y1="564.70" x2="367.1" y2="564.70" stroke="#333" stroke-width="1"/><text transform="translate(361.40,582.45) scale(0.840,1)" font-size="10.90" fill="#111" font-weight="normal" font-style="normal" text-anchor="end" stroke="#111" stroke-width="0.14">50</text><line x1="364.6" y1="550.86" x2="367.6" y2="550.86" stroke="#333" stroke-width="1"/><line x1="364.6" y1="537.01" x2="367.1" y2="537.01" stroke="#333" stroke-width="1"/><text transform="translate(361.40,554.76) scale(0.840,1)" font-size="10.90" fill="#111" font-weight="normal" font-style="normal" text-anchor="end" stroke="#111" stroke-width="0.14">100</text><line x1="364.6" y1="523.17" x2="367.6" y2="523.17" stroke="#333" stroke-width="1"/><line x1="364.6" y1="509.32" x2="367.1" y2="509.32" stroke="#333" stroke-width="1"/><text transform="translate(361.40,527.07) scale(0.840,1)" font-size="10.90" fill="#111" font-weight="normal" font-style="normal" text-anchor="end" stroke="#111" stroke-width="0.14">150</text><line x1="364.6" y1="495.49" x2="367.6" y2="495.49" stroke="#333" stroke-width="1"/><line x1="364.6" y1="481.64" x2="367.1" y2="481.64" stroke="#333" stroke-width="1"/><text transform="translate(361.40,499.39) scale(0.840,1)" font-size="10.90" fill="#111" font-weight="normal" font-style="normal" text-anchor="end" stroke="#111" stroke-width="0.14">200</text><line x1="364.6" y1="467.80" x2="367.6" y2="467.80" stroke="#333" stroke-width="1"/><text transform="translate(361.40,471.70) scale(0.840,1)" font-size="10.90" fill="#111" font-weight="normal" font-style="normal" text-anchor="end" stroke="#111" stroke-width="0.14">250</text><line x1="364.60" y1="689.3" x2="364.60" y2="686.3" stroke="#333" stroke-width="1"/><line x1="406.03" y1="689.3" x2="406.03" y2="686.8" stroke="#333" stroke-width="1"/><text transform="translate(364.60,700.60) scale(0.840,1)" font-size="10.90" fill="#111" font-weight="normal" font-style="normal" text-anchor="middle" stroke="#111" stroke-width="0.14">0</text><line x1="447.46" y1="689.3" x2="447.46" y2="686.3" stroke="#333" stroke-width="1"/><line x1="488.89" y1="689.3" x2="488.89" y2="686.8" stroke="#333" stroke-width="1"/><text transform="translate(447.46,700.60) scale(0.840,1)" font-size="10.90" fill="#111" font-weight="normal" font-style="normal" text-anchor="middle" stroke="#111" stroke-width="0.14">2</text><line x1="530.31" y1="689.3" x2="530.31" y2="686.3" stroke="#333" stroke-width="1"/><line x1="571.74" y1="689.3" x2="571.74" y2="686.8" stroke="#333" stroke-width="1"/><text transform="translate(530.31,700.60) scale(0.840,1)" font-size="10.90" fill="#111" font-weight="normal" font-style="normal" text-anchor="middle" stroke="#111" stroke-width="0.14">4</text><line x1="613.17" y1="689.3" x2="613.17" y2="686.3" stroke="#333" stroke-width="1"/><line x1="654.60" y1="689.3" x2="654.60" y2="686.8" stroke="#333" stroke-width="1"/><text transform="translate(613.17,700.60) scale(0.840,1)" font-size="10.90" fill="#111" font-weight="normal" font-style="normal" text-anchor="middle" stroke="#111" stroke-width="0.14">6</text><line x1="696.03" y1="689.3" x2="696.03" y2="686.3" stroke="#333" stroke-width="1"/><line x1="737.46" y1="689.3" x2="737.46" y2="686.8" stroke="#333" stroke-width="1"/><text transform="translate(696.03,700.60) scale(0.840,1)" font-size="10.90" fill="#111" font-weight="normal" font-style="normal" text-anchor="middle" stroke="#111" stroke-width="0.14">8</text><line x1="778.89" y1="689.3" x2="778.89" y2="686.3" stroke="#333" stroke-width="1"/><line x1="820.32" y1="689.3" x2="820.32" y2="686.8" stroke="#333" stroke-width="1"/><text transform="translate(778.89,700.60) scale(0.840,1)" font-size="10.90" fill="#111" font-weight="normal" font-style="normal" text-anchor="middle" stroke="#111" stroke-width="0.14">10</text><line x1="861.74" y1="689.3" x2="861.74" y2="686.3" stroke="#333" stroke-width="1"/><line x1="903.17" y1="689.3" x2="903.17" y2="686.8" stroke="#333" stroke-width="1"/><text transform="translate(861.74,700.60) scale(0.840,1)" font-size="10.90" fill="#111" font-weight="normal" font-style="normal" text-anchor="middle" stroke="#111" stroke-width="0.14">12</text><line x1="944.60" y1="689.3" x2="944.60" y2="686.3" stroke="#333" stroke-width="1"/><text transform="translate(944.60,700.60) scale(0.840,1)" font-size="10.90" fill="#111" font-weight="normal" font-style="normal" text-anchor="middle" stroke="#111" stroke-width="0.14">14</text><text transform="translate(335.10,579.00) rotate(-90) scale(0.955,1)" font-size="14.00" fill="#111" font-weight="bold" font-style="normal" text-anchor="middle">Charge (-)</text><text transform="translate(654.00,718.70) scale(1.030,1)" font-size="13.60" fill="#111" font-weight="bold" font-style="normal" text-anchor="middle">pH (-)</text><g clip-path="url(#cp2)"><path d="M366.19,605.91 L366.74,605.91 L367.39,605.91 L368.12,605.91 L368.93,605.92 L369.81,605.92 L370.73,605.92 L371.68,605.92 L372.65,605.93 L373.64,605.93 L374.63,605.93 L375.63,605.93 L376.63,605.94 L377.63,605.94 L378.63,605.94 L379.63,605.95 L380.64,605.95 L381.64,605.95 L382.64,605.95 L383.64,605.96 L384.65,605.96 L385.65,605.96 L386.65,605.96 L387.65,605.97 L388.66,605.97 L389.66,605.97 L390.66,605.97 L391.66,605.98 L392.66,605.98 L393.67,605.98 L394.67,605.99 L395.67,605.99 L396.67,605.99 L397.68,605.99 L398.68,606.00 L399.68,606.00 L400.68,606.00 L401.69,606.00 L402.69,606.01 L403.69,606.01 L404.69,606.01 L405.69,606.02 L406.70,606.02 L407.70,606.02 L408.70,606.02 L409.70,606.03 L410.71,606.03 L411.71,606.03 L412.71,606.03 L413.71,606.04 L414.72,606.04 L415.72,606.04 L416.72,606.04 L417.72,606.05 L418.72,606.05 L419.73,606.05 L420.73,606.06 L421.73,606.06 L422.74,606.07 L423.74,606.07 L424.75,606.08 L425.76,606.09 L426.76,606.10 L427.77,606.12 L428.78,606.13 L429.80,606.15 L430.81,606.17 L431.82,606.19 L432.84,606.21 L433.85,606.24 L434.87,606.26 L435.88,606.28 L436.90,606.30 L437.92,606.33 L438.93,606.35 L439.95,606.37 L440.96,606.40 L441.98,606.42 L442.99,606.44 L444.01,606.47 L445.02,606.49 L446.04,606.51 L447.06,606.54 L448.07,606.56 L449.09,606.58 L450.10,606.61 L451.12,606.63 L452.14,606.66 L453.15,606.69 L454.17,606.72 L455.19,606.76 L456.21,606.80 L457.24,606.86 L458.26,606.91 L459.29,606.98 L460.32,607.05 L461.35,607.13 L462.38,607.22 L463.41,607.31 L464.45,607.40 L465.48,607.50 L466.51,607.60 L467.55,607.69 L468.59,607.79 L469.62,607.89 L470.66,608.00 L471.69,608.10 L472.73,608.20 L473.76,608.31 L474.80,608.42 L475.83,608.54 L476.86,608.66 L477.89,608.80 L478.92,608.95 L479.94,609.11 L480.96,609.28 L481.98,609.47 L483.00,609.67 L484.02,609.88 L485.03,610.09 L486.04,610.32 L487.06,610.55 L488.07,610.78 L489.08,611.01 L490.09,611.25 L491.10,611.49 L492.10,611.74 L493.11,611.99 L494.11,612.25 L495.11,612.51 L496.10,612.79 L497.09,613.09 L498.07,613.39 L499.05,613.71 L500.02,614.04 L500.99,614.38 L501.95,614.73 L502.91,615.08 L503.87,615.44 L504.83,615.80 L505.79,616.17 L506.74,616.54 L507.69,616.91 L508.63,617.30 L509.57,617.70 L510.50,618.11 L511.42,618.53 L512.34,618.97 L513.24,619.43 L514.13,619.90 L515.01,620.40 L515.88,620.90 L516.75,621.41 L517.61,621.94 L518.47,622.46 L519.33,623.00 L520.19,623.53 L521.04,624.07 L521.89,624.62 L522.74,625.17 L523.58,625.73 L524.42,626.30 L525.26,626.87 L526.09,627.46 L526.91,628.06 L527.73,628.67 L528.54,629.29 L529.35,629.91 L530.16,630.55 L530.97,631.19 L531.77,631.83 L532.57,632.48 L533.37,633.12 L534.17,633.77 L534.97,634.42 L535.77,635.07 L536.57,635.72 L537.37,636.37 L538.17,637.02 L538.97,637.67 L539.77,638.32 L540.57,638.97 L541.37,639.62 L542.17,640.26 L542.97,640.91 L543.77,641.56 L544.57,642.21 L545.38,642.86 L546.18,643.50 L546.99,644.15 L547.79,644.79 L548.60,645.43 L549.42,646.07 L550.23,646.71 L551.05,647.35 L551.87,647.98 L552.69,648.61 L553.52,649.25 L554.35,649.88 L555.17,650.51 L556.00,651.13 L556.83,651.76 L557.66,652.39 L558.49,653.02 L559.32,653.64 L560.15,654.27 L560.98,654.88 L561.82,655.49 L562.66,656.09 L563.51,656.68 L564.37,657.26 L565.24,657.81 L566.12,658.34 L567.01,658.86 L567.91,659.35 L568.82,659.82 L569.73,660.28 L570.66,660.72 L571.59,661.16 L572.52,661.58 L573.46,662.00 L574.40,662.42 L575.34,662.82 L576.28,663.23 L577.22,663.62 L578.16,664.01 L579.11,664.38 L580.06,664.75 L581.00,665.10 L581.95,665.44 L582.91,665.77 L583.86,666.09 L584.81,666.40 L585.77,666.70 L586.73,667.00 L587.69,667.29 L588.66,667.58 L589.63,667.85 L590.61,668.12 L591.59,668.37 L592.58,668.62 L593.58,668.85 L594.59,669.07 L595.61,669.27 L596.63,669.47 L597.65,669.66 L598.68,669.84 L599.71,670.01 L600.74,670.18 L601.77,670.33 L602.81,670.48 L603.84,670.62 L604.87,670.75 L605.90,670.87 L606.93,670.98 L607.95,671.08 L608.98,671.17 L610.01,671.26 L611.03,671.34 L612.06,671.42 L613.08,671.50 L614.11,671.57 L615.13,671.64 L616.16,671.72 L617.18,671.79 L618.21,671.86 L619.23,671.92 L620.25,671.99 L621.27,672.05 L622.29,672.11 L623.31,672.17 L624.33,672.21 L625.35,672.26 L626.36,672.29 L627.37,672.33 L628.38,672.36 L629.39,672.38 L630.40,672.40 L631.41,672.43 L632.42,672.45 L633.43,672.47 L634.44,672.48 L635.45,672.50 L636.45,672.52 L637.46,672.54 L638.47,672.56 L639.48,672.58 L640.49,672.60 L641.49,672.61 L642.50,672.63 L643.51,672.65 L644.52,672.67 L645.53,672.69 L646.54,672.71 L647.54,672.72 L648.55,672.74 L649.56,672.76 L650.57,672.77 L651.58,672.79 L652.59,672.80 L653.59,672.82 L654.60,672.83 L655.61,672.84 L656.62,672.85 L657.63,672.85 L658.64,672.86 L659.65,672.86 L660.66,672.87 L661.67,672.87 L662.68,672.87 L663.69,672.88 L664.70,672.88 L665.71,672.88 L666.73,672.89 L667.74,672.89 L668.75,672.89 L669.76,672.89 L670.77,672.90 L671.78,672.90 L672.79,672.90 L673.80,672.90 L674.81,672.91 L675.82,672.91 L676.83,672.91 L677.84,672.92 L678.85,672.92 L679.86,672.92 L680.87,672.92 L681.88,672.93 L682.89,672.93 L683.90,672.93 L684.91,672.93 L685.92,672.94 L686.93,672.94 L687.94,672.94 L688.95,672.95 L689.96,672.95 L690.97,672.95 L691.98,672.95 L692.99,672.95 L694.00,672.96 L695.01,672.96 L696.02,672.96 L697.02,672.96 L698.03,672.96 L699.03,672.96 L700.04,672.96 L701.04,672.97 L702.04,672.97 L703.04,672.97 L704.05,672.97 L705.05,672.97 L706.05,672.97 L707.05,672.97 L708.06,672.97 L709.06,672.97 L710.06,672.97 L711.06,672.97 L712.07,672.97 L713.07,672.97 L714.07,672.97 L715.07,672.97 L716.07,672.97 L717.08,672.97 L718.08,672.97 L719.08,672.97 L720.08,672.97 L721.09,672.97 L722.09,672.97 L723.09,672.97 L724.09,672.97 L725.10,672.97 L726.10,672.97 L727.10,672.97 L728.10,672.97 L729.10,672.97 L730.11,672.97 L731.11,672.97 L732.11,672.97 L733.11,672.97 L734.12,672.97 L735.12,672.97 L736.12,672.97 L737.12,672.97 L738.13,672.97 L739.13,672.97 L740.13,672.97 L741.13,672.97 L742.13,672.97 L743.14,672.97 L744.14,672.98 L745.14,672.98 L746.14,672.98 L747.15,672.98 L748.15,672.98 L749.15,672.98 L750.15,672.98 L751.16,672.98 L752.16,672.98 L753.16,672.98 L754.16,672.98 L755.16,672.98 L756.17,672.98 L757.17,672.98 L758.17,672.98 L759.17,672.98 L760.18,672.98 L761.18,672.98 L762.18,672.98 L763.18,672.98 L764.19,672.98 L765.19,672.98 L766.19,672.98 L767.19,672.98 L768.19,672.98 L769.20,672.98 L770.20,672.98 L771.20,672.98 L772.20,672.98 L773.21,672.98 L774.21,672.98 L775.21,672.98 L776.21,672.98 L777.22,672.98 L778.22,672.98 L779.22,672.98 L780.22,672.98 L781.22,672.98 L782.23,672.98 L783.23,672.98 L784.23,672.98 L785.23,672.98 L786.24,672.98 L787.24,672.98 L788.24,672.98 L789.24,672.99 L790.25,672.99 L791.25,672.99 L792.25,672.99 L793.25,672.99 L794.25,672.99 L795.26,672.99 L796.26,672.99 L797.26,672.99 L798.26,672.99 L799.27,672.99 L800.27,672.99 L801.27,672.99 L802.27,672.99 L803.28,672.99 L804.28,672.99 L805.28,672.99 L806.28,672.99 L807.28,672.99 L808.29,672.99 L809.29,672.99 L810.29,672.99 L811.29,672.99 L812.30,672.99 L813.30,672.99 L814.30,672.99 L815.30,672.99 L816.31,672.99 L817.31,672.99 L818.31,672.99 L819.31,672.99 L820.31,672.99 L821.32,672.99 L822.32,672.99 L823.32,672.99 L824.32,672.99 L825.33,672.99 L826.33,672.99 L827.33,672.99 L828.33,672.99 L829.34,672.99 L830.34,672.99 L831.34,672.99 L832.34,672.99 L833.34,672.99 L834.35,673.00 L835.35,673.00 L836.35,673.00 L837.35,673.00 L838.36,673.00 L839.36,673.00 L840.36,673.00 L841.36,673.00 L842.36,673.00 L843.37,673.00 L844.37,673.00 L845.37,673.00 L846.37,673.00 L847.38,673.00 L848.38,673.00 L849.38,673.00 L850.38,673.00 L851.39,673.00 L852.39,673.00 L853.39,673.00 L854.39,673.00 L855.39,673.00 L856.40,673.00 L857.40,673.00 L858.40,673.00 L859.40,673.00 L860.41,673.00 L861.41,673.00 L862.41,673.00 L863.41,673.00 L864.42,673.00 L865.42,673.00 L866.42,673.00 L867.42,673.00 L868.42,673.00 L869.43,673.00 L870.43,673.00 L871.43,673.00 L872.43,673.00 L873.44,673.00 L874.44,673.00 L875.44,673.00 L876.44,673.00 L877.45,673.00 L878.45,673.01 L879.45,673.01 L880.45,673.01 L881.45,673.01 L882.46,673.01 L883.46,673.01 L884.46,673.01 L885.46,673.01 L886.47,673.01 L887.47,673.01 L888.47,673.01 L889.47,673.01 L890.48,673.01 L891.48,673.01 L892.48,673.01 L893.48,673.01 L894.48,673.01 L895.49,673.01 L896.49,673.01 L897.49,673.01 L898.49,673.01 L899.50,673.01 L900.50,673.01 L901.50,673.01 L902.50,673.01 L903.51,673.01 L904.51,673.01 L905.51,673.01 L906.51,673.01 L907.51,673.01 L908.52,673.01 L909.52,673.01 L910.52,673.01 L911.52,673.01 L912.53,673.01 L913.53,673.01 L914.53,673.01 L915.53,673.01 L916.54,673.01 L917.54,673.01 L918.54,673.01 L919.54,673.01 L920.54,673.01 L921.55,673.01 L922.55,673.01 L923.55,673.02 L924.55,673.02 L925.56,673.02 L926.56,673.02 L927.56,673.02 L928.56,673.02 L929.57,673.02 L930.57,673.02 L931.57,673.02 L932.57,673.02 L933.57,673.02 L934.57,673.02 L935.56,673.02 L936.55,673.02 L937.52,673.02 L938.47,673.02 L939.39,673.02 L940.27,673.02 L941.08,673.02 L941.81,673.02 L942.46,673.02 L943.01,673.02" fill="none" stroke="#f5b014" stroke-width="2.2"/><path d="M366.20,473.34 L366.76,473.34 L367.41,473.34 L368.15,473.34 L368.97,473.34 L369.85,473.34 L370.78,473.35 L371.73,473.35 L372.71,473.35 L373.71,473.35 L374.71,473.35 L375.72,473.35 L376.73,473.35 L377.74,473.36 L378.75,473.36 L379.76,473.36 L380.77,473.36 L381.78,473.36 L382.79,473.36 L383.80,473.36 L384.81,473.36 L385.82,473.37 L386.83,473.37 L387.84,473.37 L388.85,473.37 L389.86,473.37 L390.87,473.37 L391.88,473.37 L392.89,473.38 L393.90,473.38 L394.91,473.38 L395.92,473.38 L396.93,473.38 L397.94,473.38 L398.96,473.38 L399.97,473.39 L400.98,473.39 L401.99,473.39 L403.00,473.40 L404.01,473.40 L405.02,473.41 L406.03,473.41 L407.04,473.42 L408.05,473.43 L409.06,473.44 L410.07,473.46 L411.08,473.47 L412.09,473.48 L413.10,473.50 L414.11,473.51 L415.12,473.53 L416.13,473.54 L417.14,473.56 L418.15,473.57 L419.16,473.59 L420.17,473.60 L421.19,473.62 L422.20,473.63 L423.21,473.65 L424.22,473.66 L425.23,473.68 L426.24,473.69 L427.25,473.70 L428.26,473.72 L429.27,473.73 L430.28,473.75 L431.29,473.76 L432.30,473.78 L433.31,473.79 L434.32,473.81 L435.33,473.82 L436.34,473.84 L437.35,473.85 L438.36,473.87 L439.37,473.88 L440.38,473.90 L441.40,473.92 L442.41,473.94 L443.42,473.96 L444.43,473.99 L445.44,474.02 L446.45,474.05 L447.47,474.09 L448.48,474.14 L449.49,474.19 L450.51,474.25 L451.52,474.31 L452.54,474.38 L453.56,474.44 L454.57,474.51 L455.59,474.59 L456.60,474.66 L457.62,474.73 L458.64,474.80 L459.65,474.87 L460.67,474.95 L461.69,475.02 L462.70,475.09 L463.72,475.16 L464.73,475.24 L465.75,475.31 L466.77,475.38 L467.78,475.46 L468.80,475.53 L469.82,475.60 L470.83,475.68 L471.85,475.75 L472.86,475.83 L473.88,475.91 L474.89,476.01 L475.90,476.10 L476.90,476.22 L477.91,476.34 L478.91,476.49 L479.90,476.66 L480.89,476.84 L481.87,477.05 L482.85,477.28 L483.83,477.52 L484.80,477.77 L485.77,478.04 L486.74,478.31 L487.71,478.58 L488.68,478.86 L489.64,479.14 L490.61,479.42 L491.58,479.70 L492.55,479.98 L493.51,480.26 L494.48,480.54 L495.45,480.82 L496.41,481.11 L497.38,481.39 L498.34,481.67 L499.31,481.96 L500.27,482.26 L501.23,482.56 L502.18,482.88 L503.13,483.21 L504.07,483.56 L505.00,483.93 L505.93,484.33 L506.84,484.76 L507.74,485.21 L508.64,485.69 L509.53,486.18 L510.41,486.69 L511.29,487.22 L512.16,487.75 L513.04,488.29 L513.91,488.83 L514.78,489.37 L515.65,489.92 L516.52,490.46 L517.38,491.01 L518.25,491.56 L519.12,492.12 L519.98,492.67 L520.84,493.24 L521.69,493.81 L522.54,494.39 L523.38,494.98 L524.21,495.58 L525.04,496.19 L525.86,496.81 L526.68,497.43 L527.49,498.06 L528.30,498.70 L529.11,499.34 L529.92,499.98 L530.73,500.62 L531.53,501.26 L532.34,501.91 L533.15,502.55 L533.95,503.19 L534.76,503.84 L535.56,504.48 L536.37,505.13 L537.17,505.77 L537.98,506.41 L538.78,507.06 L539.59,507.70 L540.40,508.34 L541.20,508.98 L542.01,509.62 L542.81,510.26 L543.62,510.89 L544.42,511.52 L545.23,512.15 L546.03,512.77 L546.84,513.38 L547.65,514.00 L548.45,514.61 L549.26,515.22 L550.06,515.82 L550.87,516.43 L551.67,517.03 L552.48,517.64 L553.28,518.24 L554.09,518.84 L554.90,519.45 L555.70,520.05 L556.51,520.65 L557.31,521.26 L558.12,521.86 L558.92,522.46 L559.73,523.06 L560.54,523.66 L561.35,524.26 L562.16,524.85 L562.98,525.44 L563.80,526.02 L564.63,526.59 L565.48,527.15 L566.33,527.69 L567.20,528.21 L568.08,528.72 L568.98,529.21 L569.89,529.68 L570.81,530.14 L571.73,530.59 L572.67,531.03 L573.61,531.46 L574.55,531.89 L575.49,532.32 L576.44,532.75 L577.38,533.18 L578.33,533.60 L579.27,534.03 L580.22,534.46 L581.16,534.88 L582.11,535.30 L583.06,535.72 L584.01,536.14 L584.96,536.55 L585.91,536.96 L586.86,537.35 L587.82,537.74 L588.78,538.12 L589.75,538.48 L590.71,538.83 L591.68,539.18 L592.66,539.51 L593.63,539.84 L594.61,540.17 L595.59,540.49 L596.56,540.81 L597.54,541.12 L598.52,541.44 L599.50,541.75 L600.48,542.07 L601.46,542.38 L602.44,542.70 L603.42,543.01 L604.40,543.32 L605.38,543.63 L606.36,543.94 L607.34,544.24 L608.33,544.54 L609.31,544.83 L610.30,545.12 L611.29,545.41 L612.28,545.68 L613.28,545.95 L614.27,546.22 L615.27,546.49 L616.26,546.75 L617.26,547.01 L618.26,547.27 L619.25,547.52 L620.25,547.78 L621.25,548.04 L622.25,548.29 L623.25,548.55 L624.25,548.81 L625.24,549.06 L626.24,549.31 L627.24,549.56 L628.25,549.80 L629.25,550.04 L630.25,550.27 L631.26,550.49 L632.27,550.69 L633.29,550.89 L634.30,551.08 L635.32,551.26 L636.34,551.43 L637.36,551.59 L638.39,551.75 L639.41,551.91 L640.44,552.06 L641.46,552.21 L642.49,552.36 L643.51,552.52 L644.54,552.67 L645.56,552.82 L646.59,552.97 L647.61,553.12 L648.64,553.27 L649.66,553.42 L650.68,553.56 L651.70,553.71 L652.71,553.86 L653.73,554.01 L654.74,554.15 L655.75,554.30 L656.75,554.45 L657.75,554.59 L658.76,554.73 L659.76,554.88 L660.76,555.02 L661.75,555.17 L662.75,555.31 L663.75,555.45 L664.75,555.60 L665.75,555.74 L666.75,555.88 L667.74,556.03 L668.74,556.17 L669.74,556.32 L670.73,556.47 L671.73,556.62 L672.72,556.78 L673.72,556.94 L674.71,557.10 L675.70,557.27 L676.69,557.45 L677.67,557.64 L678.66,557.83 L679.64,558.02 L680.62,558.22 L681.60,558.42 L682.58,558.62 L683.56,558.83 L684.54,559.03 L685.52,559.24 L686.50,559.45 L687.48,559.65 L688.46,559.86 L689.44,560.07 L690.42,560.27 L691.40,560.48 L692.38,560.69 L693.36,560.90 L694.34,561.11 L695.32,561.32 L696.31,561.53 L697.29,561.75 L698.28,561.97 L699.26,562.19 L700.25,562.41 L701.24,562.64 L702.23,562.86 L703.22,563.09 L704.21,563.32 L705.20,563.55 L706.19,563.77 L707.18,564.00 L708.17,564.23 L709.16,564.46 L710.15,564.69 L711.14,564.92 L712.13,565.15 L713.12,565.38 L714.11,565.61 L715.11,565.85 L716.10,566.09 L717.09,566.34 L718.08,566.59 L719.08,566.85 L720.07,567.12 L721.07,567.40 L722.06,567.69 L723.06,567.98 L724.06,568.28 L725.05,568.59 L726.05,568.90 L727.05,569.22 L728.05,569.53 L729.05,569.85 L730.05,570.18 L731.04,570.50 L732.04,570.83 L733.03,571.16 L734.02,571.50 L735.00,571.85 L735.98,572.20 L736.95,572.57 L737.92,572.94 L738.88,573.33 L739.84,573.72 L740.80,574.12 L741.75,574.53 L742.69,574.95 L743.64,575.36 L744.58,575.78 L745.53,576.20 L746.47,576.62 L747.41,577.05 L748.36,577.47 L749.30,577.89 L750.24,578.31 L751.19,578.73 L752.13,579.16 L753.07,579.58 L754.01,580.00 L754.96,580.42 L755.90,580.85 L756.84,581.27 L757.78,581.70 L758.71,582.14 L759.64,582.58 L760.56,583.03 L761.47,583.50 L762.36,583.98 L763.25,584.49 L764.11,585.02 L764.96,585.57 L765.79,586.15 L766.60,586.75 L767.41,587.36 L768.20,587.99 L768.98,588.64 L769.76,589.29 L770.54,589.94 L771.31,590.60 L772.08,591.26 L772.85,591.92 L773.62,592.58 L774.39,593.24 L775.16,593.90 L775.93,594.56 L776.70,595.22 L777.47,595.88 L778.23,596.55 L779.00,597.21 L779.77,597.87 L780.54,598.53 L781.31,599.19 L782.08,599.85 L782.85,600.51 L783.62,601.17 L784.39,601.84 L785.16,602.50 L785.93,603.16 L786.69,603.83 L787.46,604.49 L788.22,605.16 L788.98,605.83 L789.74,606.51 L790.49,607.19 L791.24,607.87 L791.98,608.56 L792.71,609.26 L793.45,609.96 L794.18,610.66 L794.90,611.37 L795.63,612.08 L796.35,612.79 L797.07,613.50 L797.79,614.22 L798.51,614.93 L799.23,615.64 L799.95,616.36 L800.67,617.07 L801.39,617.78 L802.11,618.50 L802.83,619.21 L803.55,619.93 L804.27,620.64 L804.99,621.35 L805.71,622.07 L806.42,622.78 L807.14,623.50 L807.86,624.21 L808.58,624.93 L809.30,625.64 L810.02,626.35 L810.74,627.07 L811.46,627.78 L812.18,628.49 L812.90,629.21 L813.63,629.92 L814.35,630.62 L815.09,631.33 L815.82,632.03 L816.57,632.72 L817.32,633.40 L818.09,634.07 L818.87,634.73 L819.66,635.38 L820.47,636.01 L821.29,636.63 L822.12,637.25 L822.96,637.86 L823.80,638.46 L824.65,639.05 L825.50,639.65 L826.35,640.23 L827.21,640.82 L828.07,641.39 L828.94,641.95 L829.81,642.50 L830.69,643.04 L831.57,643.55 L832.47,644.05 L833.37,644.52 L834.28,644.98 L835.20,645.41 L836.13,645.83 L837.06,646.23 L838.00,646.62 L838.93,647.01 L839.87,647.39 L840.82,647.77 L841.76,648.15 L842.70,648.53 L843.64,648.90 L844.59,649.28 L845.53,649.66 L846.47,650.03 L847.41,650.41 L848.36,650.79 L849.30,651.16 L850.24,651.54 L851.19,651.91 L852.13,652.29 L853.07,652.66 L854.02,653.04 L854.96,653.41 L855.91,653.78 L856.85,654.15 L857.80,654.52 L858.75,654.88 L859.70,655.24 L860.65,655.60 L861.61,655.95 L862.57,656.30 L863.52,656.65 L864.48,656.99 L865.44,657.34 L866.40,657.68 L867.37,658.02 L868.33,658.36 L869.29,658.70 L870.25,659.04 L871.21,659.38 L872.17,659.72 L873.14,660.06 L874.10,660.40 L875.06,660.74 L876.02,661.08 L876.98,661.42 L877.95,661.76 L878.91,662.10 L879.87,662.43 L880.84,662.77 L881.80,663.09 L882.77,663.41 L883.74,663.72 L884.72,664.02 L885.70,664.30 L886.68,664.57 L887.67,664.82 L888.67,665.06 L889.66,665.28 L890.67,665.49 L891.67,665.70 L892.68,665.89 L893.69,666.08 L894.70,666.26 L895.72,666.45 L896.73,666.63 L897.74,666.81 L898.75,666.99 L899.77,667.17 L900.78,667.35 L901.79,667.53 L902.80,667.71 L903.82,667.89 L904.83,668.07 L905.84,668.25 L906.85,668.43 L907.87,668.60 L908.88,668.77 L909.90,668.93 L910.91,669.09 L911.92,669.23 L912.94,669.36 L913.96,669.48 L914.98,669.59 L915.99,669.68 L917.01,669.77 L918.03,669.84 L919.05,669.90 L920.08,669.96 L921.10,670.01 L922.12,670.06 L923.14,670.11 L924.16,670.16 L925.18,670.20 L926.21,670.25 L927.23,670.30 L928.25,670.34 L929.27,670.39 L930.29,670.44 L931.32,670.48 L932.34,670.53 L933.36,670.57 L934.37,670.62 L935.39,670.67 L936.39,670.71 L937.39,670.76 L938.35,670.80 L939.29,670.84 L940.18,670.88 L941.01,670.92 L941.76,670.95 L942.42,670.98 L942.98,671.01" fill="none" stroke="#d65555" stroke-width="4"/><path d="M366.20,473.34 L366.76,473.34 L367.41,473.34 L368.15,473.34 L368.97,473.34 L369.85,473.34 L370.78,473.34 L371.73,473.34 L372.71,473.34 L373.71,473.34 L374.71,473.34 L375.72,473.34 L376.73,473.34 L377.74,473.34 L378.75,473.34 L379.76,473.34 L380.77,473.34 L381.78,473.34 L382.79,473.34 L383.80,473.34 L384.81,473.34 L385.82,473.34 L386.83,473.34 L387.84,473.34 L388.85,473.34 L389.86,473.34 L390.87,473.34 L391.88,473.34 L392.89,473.34 L393.90,473.34 L394.91,473.34 L395.92,473.34 L396.93,473.34 L397.94,473.34 L398.96,473.34 L399.97,473.34 L400.98,473.34 L401.99,473.34 L403.00,473.34 L404.01,473.34 L405.02,473.34 L406.03,473.34 L407.04,473.34 L408.05,473.34 L409.06,473.34 L410.07,473.34 L411.08,473.34 L412.09,473.34 L413.10,473.34 L414.11,473.34 L415.12,473.34 L416.13,473.34 L417.14,473.34 L418.15,473.34 L419.16,473.34 L420.17,473.34 L421.19,473.34 L422.20,473.34 L423.21,473.34 L424.22,473.34 L425.23,473.34 L426.24,473.34 L427.25,473.34 L428.26,473.34 L429.27,473.34 L430.28,473.34 L431.29,473.34 L432.30,473.34 L433.31,473.34 L434.32,473.34 L435.33,473.34 L436.34,473.34 L437.35,473.34 L438.36,473.34 L439.37,473.34 L440.38,473.34 L441.39,473.34 L442.40,473.34 L443.41,473.34 L444.42,473.34 L445.43,473.34 L446.44,473.34 L447.45,473.34 L448.46,473.34 L449.47,473.34 L450.48,473.34 L451.49,473.34 L452.50,473.35 L453.50,473.35 L454.51,473.35 L455.52,473.35 L456.53,473.35 L457.54,473.35 L458.54,473.36 L459.55,473.36 L460.56,473.36 L461.57,473.36 L462.58,473.36 L463.58,473.36 L464.59,473.37 L465.60,473.37 L466.61,473.37 L467.62,473.37 L468.62,473.37 L469.63,473.38 L470.64,473.38 L471.65,473.38 L472.66,473.38 L473.66,473.38 L474.67,473.38 L475.68,473.39 L476.69,473.39 L477.70,473.39 L478.70,473.39 L479.71,473.39 L480.72,473.39 L481.73,473.40 L482.74,473.40 L483.74,473.40 L484.75,473.40 L485.76,473.40 L486.77,473.40 L487.78,473.41 L488.78,473.41 L489.79,473.41 L490.80,473.41 L491.81,473.41 L492.82,473.41 L493.82,473.42 L494.83,473.42 L495.84,473.42 L496.85,473.42 L497.85,473.42 L498.86,473.42 L499.87,473.43 L500.88,473.43 L501.89,473.43 L502.89,473.43 L503.90,473.43 L504.91,473.44 L505.92,473.44 L506.93,473.44 L507.93,473.44 L508.94,473.44 L509.95,473.44 L510.96,473.45 L511.97,473.45 L512.97,473.45 L513.98,473.45 L514.99,473.45 L516.00,473.45 L517.01,473.46 L518.01,473.46 L519.02,473.46 L520.03,473.46 L521.04,473.46 L522.05,473.46 L523.05,473.47 L524.06,473.47 L525.07,473.47 L526.08,473.47 L527.09,473.47 L528.09,473.47 L529.10,473.48 L530.11,473.48 L531.12,473.48 L532.13,473.48 L533.13,473.48 L534.14,473.48 L535.15,473.49 L536.16,473.49 L537.17,473.49 L538.17,473.49 L539.18,473.50 L540.19,473.50 L541.20,473.51 L542.21,473.52 L543.22,473.53 L544.24,473.55 L545.25,473.56 L546.27,473.59 L547.29,473.61 L548.30,473.64 L549.32,473.68 L550.35,473.71 L551.37,473.75 L552.39,473.78 L553.41,473.82 L554.43,473.86 L555.46,473.90 L556.48,473.94 L557.50,473.98 L558.52,474.02 L559.55,474.06 L560.57,474.10 L561.59,474.14 L562.62,474.18 L563.64,474.22 L564.66,474.26 L565.68,474.30 L566.71,474.34 L567.73,474.38 L568.75,474.42 L569.78,474.46 L570.80,474.50 L571.82,474.55 L572.84,474.60 L573.87,474.65 L574.89,474.71 L575.91,474.78 L576.94,474.85 L577.96,474.94 L578.99,475.04 L580.01,475.14 L581.04,475.26 L582.06,475.38 L583.09,475.51 L584.11,475.64 L585.14,475.78 L586.16,475.92 L587.19,476.06 L588.22,476.20 L589.24,476.34 L590.27,476.49 L591.29,476.63 L592.32,476.78 L593.34,476.92 L594.37,477.07 L595.39,477.23 L596.41,477.38 L597.43,477.55 L598.44,477.72 L599.46,477.90 L600.47,478.09 L601.47,478.29 L602.48,478.50 L603.48,478.71 L604.48,478.93 L605.49,479.15 L606.48,479.38 L607.48,479.60 L608.48,479.83 L609.48,480.06 L610.48,480.29 L611.48,480.52 L612.48,480.74 L613.47,480.97 L614.47,481.20 L615.47,481.42 L616.47,481.65 L617.47,481.87 L618.48,482.08 L619.48,482.29 L620.49,482.49 L621.50,482.69 L622.51,482.88 L623.53,483.06 L624.55,483.24 L625.57,483.41 L626.59,483.57 L627.62,483.73 L628.64,483.89 L629.66,484.05 L630.69,484.21 L631.72,484.36 L632.74,484.52 L633.77,484.67 L634.79,484.83 L635.82,484.98 L636.84,485.14 L637.86,485.29 L638.89,485.44 L639.90,485.59 L640.92,485.74 L641.94,485.89 L642.95,486.03 L643.95,486.18 L644.96,486.32 L645.96,486.45 L646.96,486.59 L647.95,486.72 L648.95,486.86 L649.94,486.99 L650.93,487.12 L651.93,487.25 L652.92,487.38 L653.91,487.51 L654.90,487.64 L655.89,487.78 L656.88,487.91 L657.88,488.04 L658.87,488.17 L659.86,488.30 L660.85,488.43 L661.84,488.56 L662.84,488.69 L663.83,488.82 L664.82,488.95 L665.81,489.08 L666.80,489.22 L667.80,489.35 L668.79,489.48 L669.78,489.62 L670.78,489.75 L671.77,489.90 L672.77,490.04 L673.77,490.19 L674.78,490.35 L675.78,490.52 L676.79,490.69 L677.81,490.88 L678.82,491.07 L679.84,491.26 L680.86,491.46 L681.89,491.67 L682.91,491.87 L683.94,492.08 L684.96,492.29 L685.99,492.50 L687.01,492.71 L688.04,492.92 L689.06,493.14 L690.09,493.35 L691.11,493.56 L692.14,493.77 L693.16,493.99 L694.18,494.20 L695.19,494.42 L696.21,494.64 L697.22,494.86 L698.22,495.08 L699.23,495.31 L700.23,495.54 L701.22,495.76 L702.22,496.00 L703.21,496.23 L704.20,496.46 L705.20,496.69 L706.19,496.93 L707.18,497.16 L708.17,497.39 L709.16,497.63 L710.15,497.86 L711.14,498.09 L712.13,498.33 L713.12,498.57 L714.11,498.81 L715.10,499.05 L716.08,499.30 L717.07,499.55 L718.05,499.82 L719.03,500.09 L720.01,500.38 L720.98,500.67 L721.95,500.98 L722.91,501.30 L723.88,501.62 L724.84,501.96 L725.80,502.29 L726.76,502.64 L727.72,502.98 L728.68,503.33 L729.64,503.67 L730.60,504.02 L731.55,504.37 L732.51,504.72 L733.47,505.06 L734.43,505.41 L735.39,505.76 L736.34,506.11 L737.30,506.46 L738.26,506.80 L739.22,507.15 L740.18,507.50 L741.13,507.85 L742.09,508.20 L743.05,508.55 L744.01,508.90 L744.96,509.25 L745.92,509.60 L746.87,509.97 L747.82,510.33 L748.76,510.71 L749.70,511.09 L750.64,511.48 L751.57,511.88 L752.50,512.30 L753.42,512.72 L754.34,513.14 L755.26,513.58 L756.18,514.02 L757.09,514.46 L758.00,514.91 L758.91,515.37 L759.81,515.83 L760.71,516.29 L761.60,516.77 L762.49,517.26 L763.37,517.77 L764.23,518.30 L765.09,518.84 L765.94,519.39 L766.78,519.97 L767.62,520.55 L768.45,521.15 L769.27,521.75 L770.09,522.36 L770.91,522.97 L771.73,523.59 L772.55,524.20 L773.36,524.82 L774.18,525.44 L774.99,526.05 L775.81,526.67 L776.63,527.29 L777.44,527.91 L778.26,528.52 L779.07,529.14 L779.89,529.76 L780.71,530.38 L781.52,530.99 L782.34,531.61 L783.15,532.23 L783.97,532.85 L784.78,533.47 L785.60,534.09 L786.41,534.71 L787.22,535.33 L788.02,535.96 L788.82,536.60 L789.61,537.24 L790.39,537.90 L791.16,538.56 L791.92,539.23 L792.68,539.91 L793.42,540.60 L794.16,541.30 L794.89,542.00 L795.62,542.71 L796.35,543.42 L797.07,544.13 L797.79,544.84 L798.51,545.56 L799.23,546.27 L799.95,546.99 L800.67,547.70 L801.39,548.42 L802.11,549.14 L802.83,549.85 L803.55,550.57 L804.27,551.28 L804.99,552.00 L805.71,552.71 L806.42,553.43 L807.14,554.14 L807.86,554.86 L808.58,555.58 L809.30,556.29 L810.02,557.01 L810.74,557.72 L811.46,558.44 L812.18,559.15 L812.90,559.87 L813.62,560.58 L814.34,561.30 L815.07,562.01 L815.79,562.72 L816.52,563.43 L817.25,564.14 L817.98,564.84 L818.72,565.54 L819.46,566.24 L820.21,566.93 L820.96,567.62 L821.71,568.31 L822.46,569.00 L823.22,569.69 L823.98,570.37 L824.74,571.05 L825.50,571.73 L826.26,572.41 L827.02,573.09 L827.79,573.76 L828.57,574.42 L829.35,575.07 L830.14,575.70 L830.95,576.32 L831.78,576.91 L832.62,577.47 L833.48,578.01 L834.36,578.53 L835.25,579.02 L836.16,579.49 L837.08,579.94 L838.01,580.39 L838.94,580.82 L839.88,581.25 L840.82,581.68 L841.76,582.10 L842.70,582.53 L843.64,582.95 L844.59,583.37 L845.53,583.79 L846.47,584.22 L847.41,584.64 L848.36,585.06 L849.30,585.48 L850.24,585.90 L851.19,586.32 L852.13,586.74 L853.07,587.16 L854.02,587.58 L854.96,587.99 L855.91,588.39 L856.85,588.79 L857.80,589.18 L858.75,589.55 L859.70,589.91 L860.65,590.26 L861.61,590.60 L862.57,590.92 L863.52,591.24 L864.48,591.54 L865.44,591.84 L866.40,592.14 L867.37,592.43 L868.33,592.72 L869.29,593.01 L870.25,593.30 L871.21,593.59 L872.17,593.88 L873.14,594.17 L874.10,594.45 L875.06,594.74 L876.02,595.03 L876.98,595.32 L877.95,595.61 L878.91,595.90 L879.87,596.18 L880.84,596.47 L881.80,596.75 L882.77,597.03 L883.74,597.30 L884.72,597.57 L885.70,597.82 L886.68,598.08 L887.67,598.32 L888.67,598.55 L889.66,598.78 L890.67,599.00 L891.67,599.22 L892.68,599.43 L893.69,599.64 L894.70,599.85 L895.72,600.05 L896.73,600.26 L897.74,600.46 L898.75,600.67 L899.77,600.87 L900.78,601.08 L901.79,601.28 L902.80,601.49 L903.82,601.69 L904.83,601.90 L905.84,602.10 L906.85,602.30 L907.87,602.50 L908.88,602.69 L909.90,602.88 L910.91,603.06 L911.92,603.22 L912.94,603.38 L913.96,603.52 L914.98,603.65 L915.99,603.76 L917.01,603.86 L918.03,603.95 L919.05,604.03 L920.08,604.11 L921.10,604.18 L922.12,604.24 L923.14,604.31 L924.16,604.37 L925.18,604.44 L926.21,604.50 L927.23,604.56 L928.25,604.62 L929.27,604.69 L930.29,604.75 L931.32,604.81 L932.34,604.88 L933.36,604.94 L934.37,605.00 L935.39,605.06 L936.39,605.12 L937.39,605.19 L938.35,605.24 L939.29,605.30 L940.18,605.36 L941.01,605.41 L941.76,605.45 L942.42,605.49 L942.98,605.53" fill="none" stroke="#96a9e0" stroke-width="2"/></g><rect x="952.5" y="458.5" width="147.8" height="69.5" fill="#fff" stroke="#e0e0e0" rx="2"/><text transform="translate(1029.50,471.20) scale(0.890,1)" font-size="9.20" fill="#111" font-weight="bold" font-style="normal" text-anchor="middle">mAb charge</text><line x1="960.5" y1="482.3" x2="977.3" y2="482.3" stroke="#d65555" stroke-width="3.5"/><text transform="translate(982.30,485.60) scale(0.980,1)" font-size="8.90" fill="#222" font-weight="normal" font-style="italic" text-anchor="start" stroke="#222" stroke-width="0.14">z</text><rect x="1083.3" y="477.8" width="10.0" height="10.0" rx="1.5" fill="#1f453e"/><path d="M1085.5,483.0 L1087.5,485.3 L1091.3,480.3" fill="none" stroke="#fff" stroke-width="1.4"/><line x1="960.5" y1="500.0" x2="977.3" y2="500.0" stroke="#96a9e0" stroke-width="1.5"/><text transform="translate(982.30,503.30) scale(0.980,1)" font-size="8.90" fill="#222" font-weight="normal" font-style="italic" text-anchor="start" stroke="#222" stroke-width="0.14">z+</text><rect x="1083.3" y="495.5" width="10.0" height="10.0" rx="1.5" fill="#1f453e"/><path d="M1085.5,500.7 L1087.5,503.0 L1091.3,498.0" fill="none" stroke="#fff" stroke-width="1.4"/><line x1="960.5" y1="517.6" x2="977.3" y2="517.6" stroke="#f5b014" stroke-width="2"/><text transform="translate(982.30,520.90) scale(0.980,1)" font-size="8.90" fill="#222" font-weight="normal" font-style="italic" text-anchor="start" stroke="#222" stroke-width="0.14">z-</text><rect x="1083.3" y="513.1" width="10.0" height="10.0" rx="1.5" fill="#1f453e"/><path d="M1085.5,518.3 L1087.5,520.6 L1091.3,515.6" fill="none" stroke="#fff" stroke-width="1.4"/><path d="M1092,148.0 h-3.5 v8.5 h8.5 v-3.5" fill="none" stroke="#111" stroke-width="1.6"/><path d="M1093,153.0 l5,-5 M1094.5,146.5 h4 v4" fill="none" stroke="#111" stroke-width="1.6"/><path d="M1092,442.8 h-3.5 v8.5 h8.5 v-3.5" fill="none" stroke="#111" stroke-width="1.6"/><path d="M1093,447.8 l5,-5 M1094.5,441.3 h4 v4" fill="none" stroke="#111" stroke-width="1.6"/><path d="M18.5,10.6 L10,18.8 L12.3,18.8 L12.3,26 L16.6,26 L16.6,21.2 L20.4,21.2 L20.4,26 L24.8,26 L24.8,18.8 L27.1,18.8 Z" fill="#fff"/><circle cx="1308.5" cy="15.3" r="3" fill="#fff"/><path d="M1302.6,25 C1302.6,20.5 1305,19.2 1308.5,19.2 C1312,19.2 1314.3,20.5 1314.3,25 Z" fill="#fff"/><rect x="1333.4" y="19.5" width="11.8" height="2.6" fill="#fff"/><path d="M1367,15.5 V13.8 H1376.4 V20.8 H1374.6" fill="none" stroke="#fff" stroke-width="1.3"/><rect x="1364.9" y="16.3" width="9.2" height="6.7" fill="none" stroke="#fff" stroke-width="1.4"/><rect x="1364.9" y="16" width="9.2" height="1.8" fill="#fff"/><path d="M1395.6,12.8 L1407.3,24.5 M1407.3,12.8 L1395.6,24.5" stroke="#fff" stroke-width="2"/><path d="M1399,33.5 L1402.7,37 L1406.4,33.5" fill="none" stroke="#fff" stroke-width="1.4"/><path d="M18.5,54.6 C19.1,58 19.5,60.9 20.7,62.6 C22.4,64.7 24.3,66.3 26,67.9 C23.5,67.1 20.8,66.5 18.5,66.5 C16.2,66.5 13.5,67.1 11,67.9 C12.7,66.3 14.6,64.7 16.3,62.6 C17.5,60.9 17.9,58 18.5,54.6 Z" fill="#fff"/><circle cx="18.3" cy="99.6" r="1.9" fill="none" stroke="#fff" stroke-width="1.5"/><rect x="17.8" y="96" width="1" height="1.8" fill="#fff"/><path d="M17.4,101.6 L13,110.3 M20.3,103.6 L24,110.3" stroke="#fff" stroke-width="1.7" stroke-linecap="round"/><path d="M18.3,110.4 L16.2,108.2 Q15.9,106.8 17.1,106.7 L18.3,107.7 L19.5,106.7 Q20.7,106.8 20.4,108.2 Z" fill="#fff"/><path d="M12.4,101.8 L13.9,103.3 L12.4,104.8 L10.9,103.3 Z M24.4,101.8 L25.9,103.3 L24.4,104.8 L22.9,103.3 Z" fill="#fff"/><rect x="13.2" y="137.4" width="10.8" height="14.8" rx="1.6" fill="#fff"/><rect x="14.8" y="139" width="7.6" height="2.6" fill="#1f453e"/><rect x="15.3" y="143.0" width="1.5" height="1.5" fill="#1f453e"/><rect x="17.9" y="143.0" width="1.5" height="1.5" fill="#1f453e"/><rect x="20.5" y="143.0" width="1.5" height="1.5" fill="#1f453e"/><rect x="15.3" y="145.7" width="1.5" height="1.5" fill="#1f453e"/><rect x="17.9" y="145.7" width="1.5" height="1.5" fill="#1f453e"/><rect x="20.5" y="145.7" width="1.5" height="1.5" fill="#1f453e"/><rect x="15.3" y="148.4" width="1.5" height="1.5" fill="#1f453e"/><rect x="17.9" y="148.4" width="1.5" height="1.5" fill="#1f453e"/><rect x="20.5" y="148.4" width="1.5" height="1.5" fill="#1f453e"/><g transform="translate(18.4,185.9) rotate(-40)"><rect x="-10" y="-1.9" width="20" height="3.8" fill="#fff"/><rect x="-7.90" y="-1.9" width="0.8" height="1.90" fill="#1f453e"/><rect x="-5.40" y="-1.9" width="0.8" height="1.20" fill="#1f453e"/><rect x="-2.90" y="-1.9" width="0.8" height="1.90" fill="#1f453e"/><rect x="-0.40" y="-1.9" width="0.8" height="1.20" fill="#1f453e"/><rect x="2.10" y="-1.9" width="0.8" height="1.90" fill="#1f453e"/><rect x="4.60" y="-1.9" width="0.8" height="1.20" fill="#1f453e"/><rect x="7.10" y="-1.9" width="0.8" height="1.90" fill="#1f453e"/></g><circle cx="18.6" cy="227.7" r="7.5" fill="#fff"/><text x="18.6" y="231.9" text-anchor="middle" font-size="11.5" font-weight="bold" fill="#1f453e">?</text><path d="M295.5,56.8 L299,59.8 L295.5,62.8 M306.9,56.8 L303.4,59.8 L306.9,62.8" fill="none" stroke="#2e3440" stroke-width="1.5"/><path d="M349,53 H358.6 L361.7,56 V65.6 Q361.7,66.4 360.9,66.4 H349 Q348.2,66.4 348.2,65.6 V53.8 Q348.2,53 349,53 Z" fill="#2e3440"/><rect x="350" y="54.6" width="7.2" height="3.2" fill="#fff"/><circle cx="355" cy="62.7" r="2.2" fill="#fff"/><rect x="407.8" y="53.4" width="10.4" height="12.6" rx="1" fill="none" stroke="#2e3440" stroke-width="1.1"/><line x1="408" y1="56.3" x2="418" y2="56.3" stroke="#2e3440" stroke-width="0.9"/><line x1="408" y1="58.8" x2="418" y2="58.8" stroke="#2e3440" stroke-width="0.9"/><line x1="408" y1="61.3" x2="418" y2="61.3" stroke="#2e3440" stroke-width="0.9"/><line x1="408" y1="63.6" x2="418" y2="63.6" stroke="#2e3440" stroke-width="0.9"/><line x1="413.2" y1="53.5" x2="413.2" y2="66" stroke="#2e3440" stroke-width="0.9"/><rect x="403.9" y="56.2" width="6.8" height="6.9" fill="#2e3440"/><path d="M405.5,57.6 L409.1,61.7 M409.1,57.6 L405.5,61.7" stroke="#fff" stroke-width="1.1"/><rect x="461" y="53.2" width="12.7" height="13" rx="1.5" fill="#2e3440"/><path d="M464.3,56.3 H470.4 M467.35,56.3 V63.5" stroke="#fff" stroke-width="1.8"/><path d="M502.2,53 V65.7 H516.3 M502.6,65.3 L507.2,57.3 L511.2,59.8 L515.6,54.5" fill="none" stroke="#2e3440" stroke-width="1.3"/><path d="M544.6,53 V65.7 H559" fill="none" stroke="#2e3440" stroke-width="1.3"/><path d="M545,65 L549.5,56.3 L553,58.8 L557.7,53.3" fill="none" stroke="#2e3440" stroke-width="1.3"/><path d="M546.5,65.9 L550.3,59.3 L553.8,61.6 L559,57 V65.9 Z" fill="#2e3440"/><text transform="translate(601.4,59.9) scale(0.78,1)" text-anchor="middle" font-size="10.4" font-weight="bold" fill="#2e3440">A</text><text transform="translate(611.6,66.9) scale(0.78,1)" text-anchor="middle" font-size="10.4" font-weight="bold" fill="#2e3440">B</text><path d="M601.6,66 L611.3,53.5" stroke="#2e3440" stroke-width="1.3"/><path d="M661.13,54.54 L661.39,52.42 L664.01,52.42 L664.27,54.54 L666.30,55.71 L668.27,54.88 L669.57,57.14 L667.87,58.42 L667.87,60.78 L669.57,62.06 L668.27,64.32 L666.30,63.49 L664.27,64.66 L664.01,66.78 L661.39,66.78 L661.13,64.66 L659.10,63.49 L657.13,64.32 L655.83,62.06 L657.53,60.78 L657.53,58.42 L655.83,57.14 L657.13,54.88 L659.10,55.71 Z" fill="#2e3440" stroke="#2e3440" stroke-width="1" stroke-linejoin="round"/><circle cx="662.70" cy="59.60" r="2.50" fill="#fdfdfd"/><path d="M702.43,54.54 L702.69,52.42 L705.31,52.42 L705.57,54.54 L707.60,55.71 L709.57,54.88 L710.87,57.14 L709.17,58.42 L709.17,60.78 L710.87,62.06 L709.57,64.32 L707.60,63.49 L705.57,64.66 L705.31,66.78 L702.69,66.78 L702.43,64.66 L700.40,63.49 L698.43,64.32 L697.13,62.06 L698.83,60.78 L698.83,58.42 L697.13,57.14 L698.43,54.88 L700.40,55.71 Z" fill="#2e3440" stroke="#2e3440" stroke-width="1" stroke-linejoin="round"/><circle cx="704.00" cy="59.60" r="2.50" fill="#fdfdfd"/><path d="M705.5,61.5 L712,61.5 L712,68 L705.5,68 Z" fill="#fdfdfd"/><path d="M707.1,62.4 L710.6,64.3 L707.1,66.2 Z" fill="#2e3440"/><path d="M738.9,55.9 H746.8 M738.9,59 H746.8 M738.9,62 H743.7" stroke="#2e3440" stroke-width="1.6"/><path d="M744.5,64.8 L750.3,59.2" stroke="#2e3440" stroke-width="1.9" stroke-linecap="round"/><circle cx="801.7" cy="59.6" r="7.3" fill="#2e3440"/><path d="M802.8,54.2 L799,60.4 L801.6,60.4 L800.5,65 L804.4,58.6 L801.8,58.6 Z" fill="#fff"/><rect x="854.2" y="53.4" width="10.6" height="12.6" rx="1" fill="none" stroke="#2e3440" stroke-width="1.1"/><line x1="857" y1="56.3" x2="864.5" y2="56.3" stroke="#2e3440" stroke-width="0.9"/><line x1="857" y1="58.8" x2="864.5" y2="58.8" stroke="#2e3440" stroke-width="0.9"/><line x1="857" y1="61.3" x2="864.5" y2="61.3" stroke="#2e3440" stroke-width="0.9"/><line x1="857" y1="63.6" x2="864.5" y2="63.6" stroke="#2e3440" stroke-width="0.9"/><rect x="850.7" y="56.2" width="7.1" height="6.8" fill="#2e3440"/><text x="854.25" y="62" text-anchor="middle" font-size="6" font-weight="bold" fill="#fff">W</text><path d="M914.5,64.8 H910.2 Q909.4,64.8 909.4,64 V54 Q909.4,53.2 910.2,53.2 H921.4 Q922.2,53.2 922.2,54 V60.5" fill="none" stroke="#2e3440" stroke-width="1.3"/><rect x="909.4" y="53.2" width="12.8" height="2.2" fill="#2e3440"/><path d="M909.4,59.6 H922.2 M915.8,55 V63" stroke="#2e3440" stroke-width="1.1"/><ellipse cx="920.3" cy="64.2" rx="4.6" ry="3.1" fill="#2e3440" stroke="#fefefe" stroke-width="1"/><circle cx="920.3" cy="64.2" r="1.1" fill="none" stroke="#fff" stroke-width="0.7"/><path d="M1388.2,148.5 L1393.3,148.5 L1390.75,151.9 Z" fill="#111"/><rect x="1402.6" y="146.2" width="4.2" height="5.8" rx="1" fill="#222"/><rect x="1401.8" y="151.5" width="5.8" height="1.3" fill="#222"/><line x1="1404.7" y1="152.5" x2="1404.7" y2="155" stroke="#555" stroke-width="1"/><rect x="1127.9" y="213.0" width="10.5" height="10.5" rx="1.3" fill="none" stroke="#fff" stroke-width="1.2"/><path d="M1130.7,216.0 h5 M1133.2,216.0 v5.5" stroke="#fff" stroke-width="1.5"/><rect x="1157.7" y="212.8" width="11" height="11" rx="1.3" fill="#fff"/><path d="M1160.7,216.0 h5 M1163.2,216.0 v5.5" stroke="#0e7a6c" stroke-width="1.6"/><path d="M1196.65,212.70 h5.2 l2.4,4.2 l3.4,-0.9 v6.5 q0,1.2 -1.2,1.2 h-8.6 q-1.2,0 -1.2,-1.2 v-8.6 q0,-1.2 1.2,-1.2 Z" fill="#fff"/><path d="M1203.35,215.70 l3.3,-3.3 v2.6 Z" fill="#fff"/><path d="M1196.85,221.90 l2.2,-2.6 l1.5,1.4 l2,-2.8 l2.8,4 Z" fill="#0e7a6c"/><rect x="1225.7" y="212.8" width="11" height="11" rx="1.3" fill="#fff"/><path d="M1226.9,221.8 l2.2,-2.6 l1.5,1.4 l2,-2.8 l2.8,4 Z" fill="#0e7a6c"/><path d="M1265.05,221.50 v-5.6 q0,-1.2 1.2,-1.2 h5.4" fill="none" stroke="#fff" stroke-width="1.2"/><path d="M1267.45,214.90 h5.4 q1.2,0 1.2,1.2 v6.2 q0,1.2 -1.2,1.2 h-5.4 q-1.2,0 -1.2,-1.2 v-1" fill="none" stroke="#fff" stroke-width="1.2"/><path d="M1268.85,219.90 h3.6 m-1.3,-1.4 l1.4,1.4 l-1.4,1.4" fill="none" stroke="#fff" stroke-width="1.1"/><rect x="1295.6" y="213.7" width="7.2" height="1.6" fill="#fff"/><rect x="1296.2" y="215.6" width="5.8" height="7.6" fill="#fff"/><rect x="1391.1" y="252.9" width="7.4" height="1.6" fill="#fff"/><rect x="1391.8" y="255.2" width="6" height="7.7" fill="#fff"/><path d="M1352.0,255.5 l4.2,4.2 l4.2,-4.2" fill="none" stroke="#222" stroke-width="1.4"/><path d="M1332.8,354.9 l4.2,4.2 l4.2,-4.2" fill="none" stroke="#222" stroke-width="1.4"/><path d="M1332.8,446.5 l4.2,4.2 l4.2,-4.2" fill="none" stroke="#222" stroke-width="1.4"/><path d="M1332.8,479.1 l4.2,4.2 l4.2,-4.2" fill="none" stroke="#222" stroke-width="1.4"/><path d="M1332.8,577.0 l4.2,4.2 l4.2,-4.2" fill="none" stroke="#222" stroke-width="1.4"/><path d="M1369.30,356.90 c-1.6,-2.6 -5.4,-2.6 -5.4,0 c0,2.6 3.8,2.6 5.4,0 c1.6,-2.6 5.4,-2.6 5.4,0 c0,2.6 -3.8,2.6 -5.4,0 Z" fill="none" stroke="#fff" stroke-width="1.6"/><path d="M1369.30,416.10 c-1.6,-2.6 -5.4,-2.6 -5.4,0 c0,2.6 3.8,2.6 5.4,0 c1.6,-2.6 5.4,-2.6 5.4,0 c0,2.6 -3.8,2.6 -5.4,0 Z" fill="none" stroke="#fff" stroke-width="1.6"/><path d="M1369.30,448.50 c-1.6,-2.6 -5.4,-2.6 -5.4,0 c0,2.6 3.8,2.6 5.4,0 c1.6,-2.6 5.4,-2.6 5.4,0 c0,2.6 -3.8,2.6 -5.4,0 Z" fill="none" stroke="#fff" stroke-width="1.6"/><path d="M1369.30,481.10 c-1.6,-2.6 -5.4,-2.6 -5.4,0 c0,2.6 3.8,2.6 5.4,0 c1.6,-2.6 5.4,-2.6 5.4,0 c0,2.6 -3.8,2.6 -5.4,0 Z" fill="none" stroke="#fff" stroke-width="1.6"/><path d="M1369.30,513.90 c-1.6,-2.6 -5.4,-2.6 -5.4,0 c0,2.6 3.8,2.6 5.4,0 c1.6,-2.6 5.4,-2.6 5.4,0 c0,2.6 -3.8,2.6 -5.4,0 Z" fill="none" stroke="#fff" stroke-width="1.6"/><path d="M1369.30,546.70 c-1.6,-2.6 -5.4,-2.6 -5.4,0 c0,2.6 3.8,2.6 5.4,0 c1.6,-2.6 5.4,-2.6 5.4,0 c0,2.6 -3.8,2.6 -5.4,0 Z" fill="none" stroke="#fff" stroke-width="1.6"/><path d="M1341.6,413.80 h3 l-1.5,-1.8 Z M1341.6,418.80 h3 l-1.5,1.8 Z" fill="#333"/><path d="M1341.6,511.60 h3 l-1.5,-1.8 Z M1341.6,516.60 h3 l-1.5,1.8 Z" fill="#333"/><path d="M1341.6,544.40 h3 l-1.5,-1.8 Z M1341.6,549.40 h3 l-1.5,1.8 Z" fill="#333"/><path d="M1341.5,385.5 h4 l-2,2.5 Z" fill="#111"/><path d="M1125.8,360 L1132.8,353.3" stroke="#111" stroke-width="1.1"/><rect x="1124.5" y="358.4" width="2.8" height="2.8" fill="#111"/><rect x="1131.3" y="351.9" width="2.8" height="2.8" fill="#111"/><path d="M1129.2,382.5 c-2.8,0 -4.7,2 -4.7,4.5 c0,2.6 2.2,4.4 4.3,4.4 c1.3,0 1.2,-1.5 1.8,-2.2 c0.7,-0.8 3.3,0.2 3.3,-2.5 c0,-2.4 -2,-4.2 -4.7,-4.2 Z" fill="none" stroke="#111" stroke-width="1.1"/><circle cx="1127" cy="386" r="0.7" fill="#111"/><circle cx="1129.3" cy="384.7" r="0.7" fill="#111"/><circle cx="1131.6" cy="386" r="0.7" fill="#111"/><rect x="1124.7" y="411.6" width="9" height="1.5" fill="#111"/><rect x="1124.7" y="414" width="9" height="1.3" fill="#222"/><rect x="1124.7" y="416.2" width="9" height="1.1" fill="#444"/><rect x="1124.7" y="418.3" width="9" height="1" fill="#777"/><rect x="1124.7" y="444.4" width="9" height="1.6" fill="#111"/><path d="M1124.7,447.4 h9 M1124.7,449.6 h9 M1124.7,451.8 h9" stroke="#222" stroke-width="1.1" stroke-dasharray="1.2,0.6"/><path d="M1129.20,477.00 L1130.42,479.93 L1133.57,480.18 L1131.17,482.24 L1131.90,485.32 L1129.20,483.67 L1126.50,485.32 L1127.23,482.24 L1124.83,480.18 L1127.98,479.93 Z" fill="none" stroke="#111" stroke-width="1"/><path d="M1128.60,509.60 L1129.76,512.40 L1132.78,512.64 L1130.48,514.61 L1131.19,517.56 L1128.60,515.98 L1126.01,517.56 L1126.72,514.61 L1124.42,512.64 L1127.44,512.40 Z" fill="none" stroke="#111" stroke-width="1"/><path d="M1131.5,516.8 h3 M1133,515.3 v3" stroke="#111" stroke-width="0.9"/><rect x="1124.6" y="542.3" width="9.4" height="9.4" fill="#111"/><path d="M1129.30,544.00 L1130.15,546.04 L1132.34,546.21 L1130.67,547.64 L1131.18,549.79 L1129.30,548.64 L1127.42,549.79 L1127.93,547.64 L1126.26,546.21 L1128.45,546.04 Z" fill="#fff" stroke="none" stroke-width="1"/><rect x="1125" y="574.6" width="9" height="9" fill="none" stroke="#111" stroke-width="1.1"/><path d="M1125,577.6 h9 M1125,580.6 h9 M1128,574.6 v9 M1131,574.6 v9" stroke="#111" stroke-width="0.9"/><path d="M1125.6,601 v9 M1127.8,601 v9 M1130,601 v9 M1132.2,601 v9" stroke="#111" stroke-width="1"/><path d="M1234.6,605.8 L1237.3,608.6 L1242,602.6" fill="none" stroke="#fff" stroke-width="1.4"/></svg>
</body></html>
